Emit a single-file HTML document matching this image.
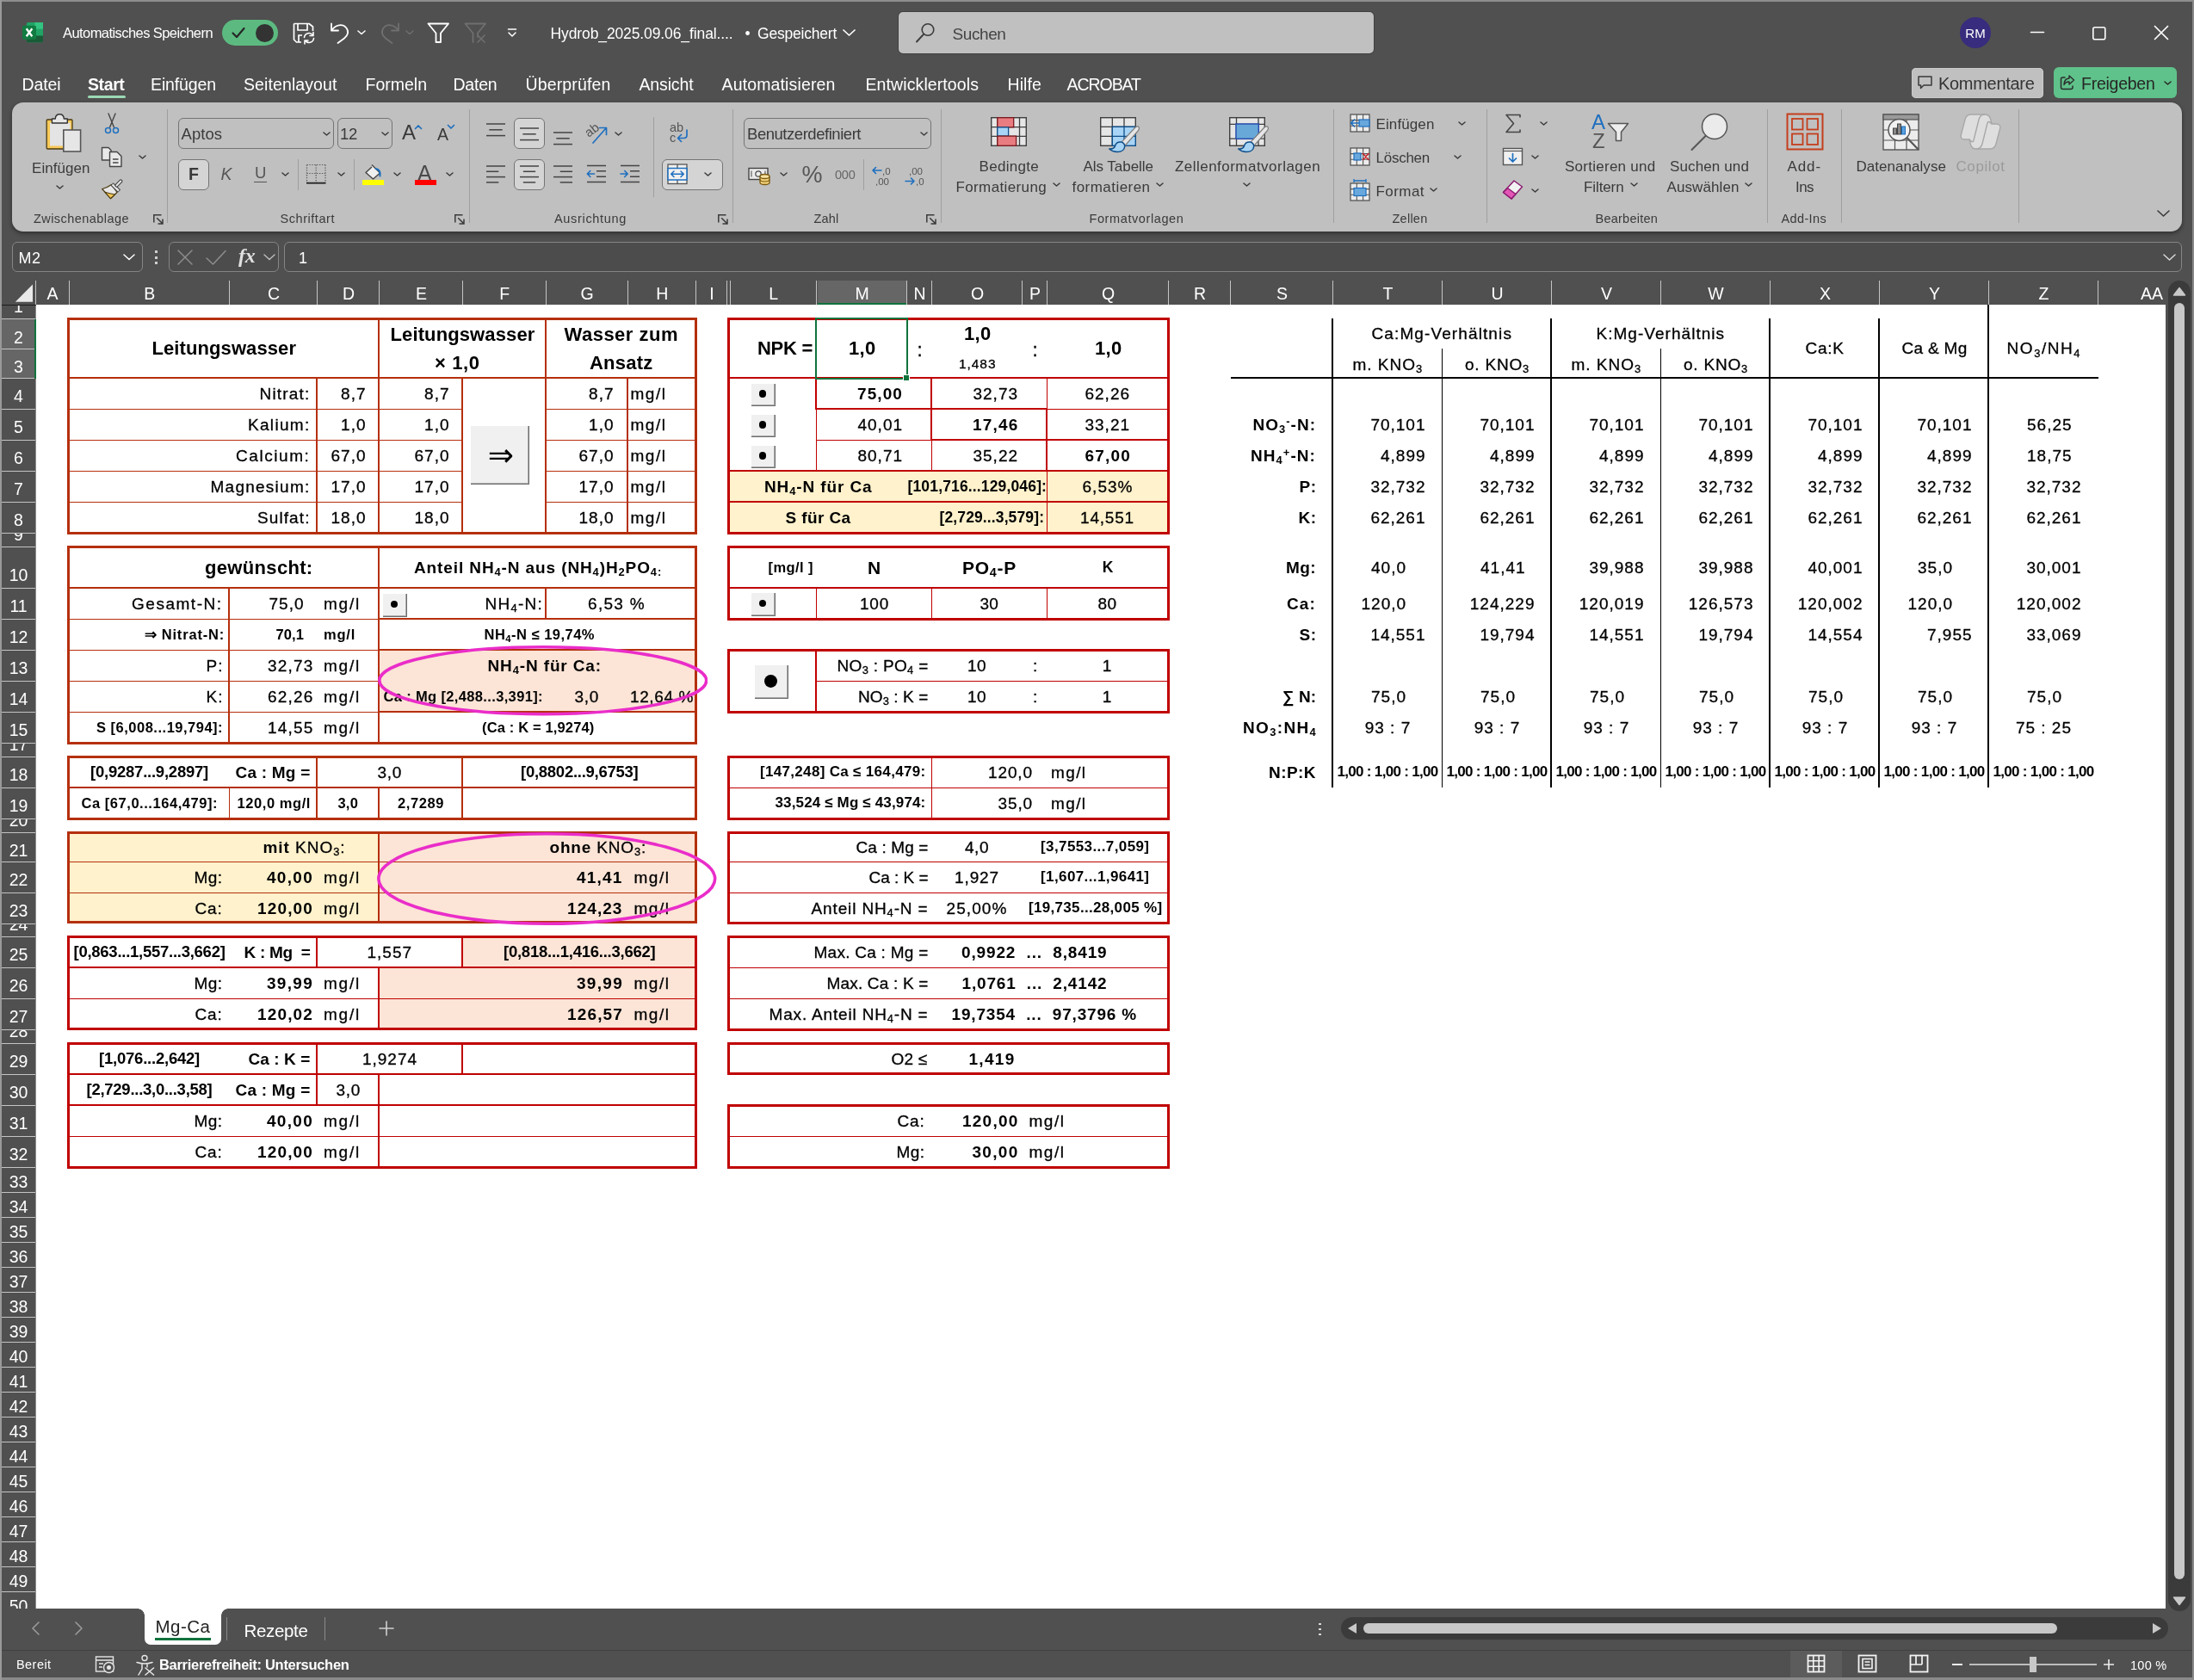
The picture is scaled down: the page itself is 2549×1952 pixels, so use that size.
<!DOCTYPE html>
<html lang="de"><head><meta charset="utf-8"><title>Hydrob_2025.09.06_final - Excel</title>
<style>
html,body{margin:0;padding:0}
body{width:2549px;height:1952px;background:#505050;position:relative;overflow:hidden;font-family:"Liberation Sans",sans-serif;color:#000}
body div,body span.t,body svg{position:absolute}
.t{white-space:pre;display:block}
.sb{font-size:68%;position:relative;top:0.28em;line-height:0}
.sp{font-size:68%;position:relative;top:-0.42em;line-height:0}
.rg{font-weight:normal}
.r{-webkit-text-stroke:.3px #000}
.r b{-webkit-text-stroke:0}
#app{left:0;top:0;width:2549px;height:1952px;will-change:transform;overflow:hidden}
</style></head>
<body><div id="app">
<svg style="left:25px;top:25px;" width="26" height="26" viewBox="0 0 26 26" fill="none"><rect x="5.800" y="1" width="19.200" height="23.300" rx="2" fill="#21a366"/><rect x="15.400" y="1" width="9.600" height="7.800" fill="#33c481"/><rect x="5.800" y="8.800" width="9.600" height="7.800" fill="#107c41"/><rect x="15.400" y="8.800" width="9.600" height="7.800" fill="#21a366"/><path d="M5.800 16.600 H25 V22.300 Q25 24.300 23 24.300 H7.800 Q5.800 24.300 5.800 22.300 Z" fill="#185c37"/><rect x="1" y="4.700" width="16" height="16" rx="1.500" fill="#107c41"/><path d="M5.700 8.300 L12.300 17.200 M12.300 8.300 L5.700 17.200" stroke="#fff" stroke-width="2.300"/></svg>
<span class="t" style="left:73.0px;top:28.0px;line-height:21px;font-size:16.5px;letter-spacing:-0.57px;color:#ffffff;">Automatisches Speichern</span>
<div style="left:258px;top:23px;width:65px;height:30px;border-radius:15px;background:#5cba80"></div>
<div style="left:297px;top:27.5px;width:21px;height:21px;border-radius:50%;background:#333"></div>
<svg style="left:268px;top:30px;" width="18" height="16" viewBox="0 0 18 16" fill="none"><path d="M2.5 8.5 L7 13 L15.5 3" stroke="#262626" stroke-width="2.2" stroke-linecap="round" stroke-linejoin="round"/></svg>
<svg style="left:339px;top:25px;" width="28" height="27" viewBox="0 0 28 27" fill="none"><path d="M2.5 2.5 H20 L24.5 6 V11 M2.5 2.5 V21 L5.5 24 H11" stroke="#fff" stroke-width="1.7" stroke-linejoin="round"/><path d="M7 3 V10 H18 V3" stroke="#fff" stroke-width="1.7"/><path d="M8 24 V16 H12" stroke="#fff" stroke-width="1.7"/><path d="M14.5 18.5 a5.5 5.5 0 0 1 10 -2.5 M25 12.5 v4 h-4 M25.5 19.5 a5.5 5.5 0 0 1 -10 2.5 M15 26 v-4 h4" stroke="#fff" stroke-width="1.6" stroke-linecap="round" stroke-linejoin="round"/></svg>
<svg style="left:382px;top:25px;" width="26" height="27" viewBox="0 0 26 27" fill="none"><path d="M3 2.5 V10.5 H11" stroke="#fff" stroke-width="1.8" stroke-linecap="round" stroke-linejoin="round"/><path d="M3.5 10 C8 3.5 16 2.5 20 7 C24 11.5 22 16.5 18 19.5 L10.5 25" stroke="#fff" stroke-width="1.8" stroke-linecap="round"/></svg>
<svg style="left:414.5px;top:34.5px;" width="10" height="6" viewBox="0 0 10 6" fill="none"><path d="M1 1 L5 4.5 L9 1" stroke="#ffffff" stroke-width="1.5" stroke-linecap="round" stroke-linejoin="round"/></svg>
<svg style="left:440px;top:25px;" width="26" height="27" viewBox="0 0 26 27" fill="none"><path d="M23 2.5 V10.5 H15" stroke="#6f6f6f" stroke-width="1.8" stroke-linecap="round" stroke-linejoin="round"/><path d="M22.5 10 C18 3.5 10 2.5 6 7 C2 11.5 4 16.5 8 19.5 L15.5 25" stroke="#6f6f6f" stroke-width="1.8" stroke-linecap="round"/></svg>
<svg style="left:471px;top:34.5px;" width="10" height="6" viewBox="0 0 10 6" fill="none"><path d="M1 1 L5 4.5 L9 1" stroke="#6f6f6f" stroke-width="1.5" stroke-linecap="round" stroke-linejoin="round"/></svg>
<svg style="left:496px;top:25px;" width="27" height="27" viewBox="0 0 27 27" fill="none"><path d="M1.5 2.5 H25 L16 13.5 V24 H10.5 V13.5 Z" stroke="#fff" stroke-width="1.8" stroke-linejoin="round"/></svg>
<svg style="left:539px;top:25px;" width="27" height="27" viewBox="0 0 27 27" fill="none"><path d="M1.5 2.5 H25 L16 13.5 V18 M10.5 24 V13.5 L1.5 2.5" stroke="#6f6f6f" stroke-width="1.8" stroke-linejoin="round" stroke-linecap="round"/><path d="M16 16 L24 24 M24 16 L16 24" stroke="#6f6f6f" stroke-width="1.7" stroke-linecap="round"/></svg>
<svg style="left:589px;top:32px;" width="12" height="12" viewBox="0 0 12 12" fill="none"><path d="M1.5 2 H10.5" stroke="#fff" stroke-width="1.5" stroke-linecap="round"/><path d="M2 6 L6 10 L10 6" stroke="#fff" stroke-width="1.5" stroke-linecap="round" stroke-linejoin="round"/></svg>
<span class="t" style="left:639.5px;top:27.8px;line-height:23px;font-size:17.5px;letter-spacing:-0.11px;color:#ffffff;">Hydrob_2025.09.06_final....</span>
<span class="t" style="left:865.4px;top:27.8px;line-height:23px;font-size:17.5px;color:#ffffff;">•</span>
<span class="t" style="left:880.0px;top:27.8px;line-height:23px;font-size:17.5px;letter-spacing:-0.21px;color:#ffffff;">Gespeichert</span>
<svg style="left:979px;top:34.25px;" width="15" height="8.5" viewBox="0 0 15 8.5" fill="none"><path d="M1 1 L7.5 7 L14 1" stroke="#ffffff" stroke-width="1.7" stroke-linecap="round" stroke-linejoin="round"/></svg>
<div style="left:1044px;top:14px;width:552px;height:48px;background:#c0c0c0;border-radius:5px;box-shadow:0 0 0 1px #404040"></div>
<svg style="left:1063px;top:26px;" width="25" height="25" viewBox="0 0 25 25" fill="none"><circle cx="15" cy="8.500" r="6.800" stroke="#3a3a3a" stroke-width="1.600"/><path d="M10 13.800 L2 22.500" stroke="#3a3a3a" stroke-width="1.9" stroke-linecap="round"/></svg>
<span class="t" style="left:1106.5px;top:27.3px;line-height:25px;font-size:19px;letter-spacing:-0.41px;color:#444;">Suchen</span>
<div style="left:2277px;top:20px;width:36px;height:36px;border-radius:50%;background:#372c7d"></div>
<span class="t" style="left:2283.3px;top:28.8px;line-height:20px;font-size:15px;color:#fff;">RM</span>
<svg style="left:2358px;top:30px;" width="18" height="16" viewBox="0 0 18 16" fill="none"><path d="M1.5 7.5 H16.5" stroke="#fff" stroke-width="1.6" stroke-linecap="round"/></svg>
<svg style="left:2430px;top:30px;" width="18" height="18" viewBox="0 0 18 18" fill="none"><rect x="1.8" y="1.8" width="14" height="14" rx="2" stroke="#fff" stroke-width="1.6"/></svg>
<svg style="left:2502px;top:29px;" width="18" height="18" viewBox="0 0 18 18" fill="none"><path d="M1.5 1.5 L16.5 16.5 M16.5 1.5 L1.5 16.5" stroke="#fff" stroke-width="1.7" stroke-linecap="round"/></svg>
<span class="t" style="left:25.5px;top:85.5px;line-height:25px;font-size:19.5px;letter-spacing:-0.10px;color:#ffffff;">Datei</span>
<span class="t" style="left:175.0px;top:85.5px;line-height:25px;font-size:19.5px;letter-spacing:-0.12px;color:#ffffff;">Einfügen</span>
<span class="t" style="left:283.0px;top:85.5px;line-height:25px;font-size:19.5px;letter-spacing:0.10px;color:#ffffff;">Seitenlayout</span>
<span class="t" style="left:424.5px;top:85.5px;line-height:25px;font-size:19.5px;color:#ffffff;">Formeln</span>
<span class="t" style="left:526.5px;top:85.5px;line-height:25px;font-size:19.5px;letter-spacing:-0.21px;color:#ffffff;">Daten</span>
<span class="t" style="left:610.5px;top:85.5px;line-height:25px;font-size:19.5px;letter-spacing:0.14px;color:#ffffff;">Überprüfen</span>
<span class="t" style="left:742.5px;top:85.5px;line-height:25px;font-size:19.5px;letter-spacing:-0.14px;color:#ffffff;">Ansicht</span>
<span class="t" style="left:838.5px;top:85.5px;line-height:25px;font-size:19.5px;letter-spacing:0.14px;color:#ffffff;">Automatisieren</span>
<span class="t" style="left:1005.5px;top:85.5px;line-height:25px;font-size:19.5px;letter-spacing:0.10px;color:#ffffff;">Entwicklertools</span>
<span class="t" style="left:1170.5px;top:85.5px;line-height:25px;font-size:19.5px;letter-spacing:0.10px;color:#ffffff;">Hilfe</span>
<span class="t" style="left:1239.5px;top:85.5px;line-height:25px;font-size:19.5px;letter-spacing:-1.05px;color:#ffffff;">ACROBAT</span>
<span class="t" style="left:102.0px;top:85.5px;line-height:25px;font-size:19.5px;letter-spacing:-0.39px;font-weight:bold;color:#ffffff;">Start</span>
<div style="left:102px;top:111px;width:44px;height:3px;border-radius:1.5px;background:#9bd8b5"></div>
<div style="left:2220.5px;top:78.5px;width:153px;height:35px;background:#c0c0c0;border-radius:5px;box-shadow:inset 0 0 0 1px #cbcbcb"></div>
<svg style="left:2227px;top:87px;" width="19" height="18" viewBox="0 0 19 18" fill="none"><path d="M2 2 H17 V12 H8 L4.5 15.5 V12 H2 Z" stroke="#3a3a3a" stroke-width="1.5" stroke-linejoin="round"/></svg>
<span class="t" style="left:2252.0px;top:84.2px;line-height:26px;font-size:20px;letter-spacing:-0.30px;color:#333;">Kommentare</span>
<div style="left:2386px;top:78px;width:143px;height:36px;background:#5fc28a;border-radius:6px"></div>
<svg style="left:2392px;top:86px;" width="20" height="20" viewBox="0 0 20 20" fill="none"><path d="M7 4 H4.5 Q2.5 4 2.5 6 V15.5 Q2.5 17.5 4.5 17.5 H14 Q16 17.5 16 15.5 V14" stroke="#2b2b2b" stroke-width="1.5" stroke-linecap="round"/><path d="M12 2 L17.5 7 L12 12 V9 Q7.5 9 6 12.5 Q6 5.5 12 5 Z" stroke="#2b2b2b" stroke-width="1.4" stroke-linejoin="round"/></svg>
<span class="t" style="left:2418.0px;top:85.3px;line-height:25px;font-size:19.5px;letter-spacing:-0.26px;color:#262626;">Freigeben</span>
<svg style="left:2514px;top:93.75px;" width="9" height="5.5" viewBox="0 0 9 5.5" fill="none"><path d="M1 1 L4.5 4 L8 1" stroke="#262626" stroke-width="1.5" stroke-linecap="round" stroke-linejoin="round"/></svg>
<div style="left:14px;top:119px;width:2521px;height:150px;background:#c0c0c0;border-radius:13px;box-shadow:0 2px 5px rgba(0,0,0,.45)"></div>
<div style="left:194px;top:127px;width:1px;height:132px;background:#9f9f9f;"></div>
<div style="left:545px;top:127px;width:1px;height:132px;background:#9f9f9f;"></div>
<div style="left:851px;top:127px;width:1px;height:132px;background:#9f9f9f;"></div>
<div style="left:1093px;top:127px;width:1px;height:132px;background:#9f9f9f;"></div>
<div style="left:1549px;top:127px;width:1px;height:132px;background:#9f9f9f;"></div>
<div style="left:1727px;top:127px;width:1px;height:132px;background:#9f9f9f;"></div>
<div style="left:2053px;top:127px;width:1px;height:132px;background:#9f9f9f;"></div>
<div style="left:2139px;top:127px;width:1px;height:132px;background:#9f9f9f;"></div>
<div style="left:2345px;top:127px;width:1px;height:132px;background:#9f9f9f;"></div>
<div style="left:346px;top:185px;width:1px;height:36px;background:#9f9f9f;"></div>
<div style="left:411px;top:185px;width:1px;height:36px;background:#9f9f9f;"></div>
<div style="left:759px;top:136px;width:1px;height:93px;background:#9f9f9f;"></div>
<div style="left:1003px;top:185px;width:1px;height:36px;background:#9f9f9f;"></div>
<span class="t" style="left:39.0px;top:244.8px;line-height:19px;font-size:14.5px;letter-spacing:0.44px;color:#3a3a3a;">Zwischenablage</span>
<span class="t" style="left:325.5px;top:244.8px;line-height:19px;font-size:14.5px;letter-spacing:0.55px;color:#3a3a3a;">Schriftart</span>
<span class="t" style="left:644.0px;top:244.8px;line-height:19px;font-size:14.5px;letter-spacing:0.68px;color:#3a3a3a;">Ausrichtung</span>
<span class="t" style="left:945.5px;top:244.8px;line-height:19px;font-size:14.5px;letter-spacing:0.20px;color:#3a3a3a;">Zahl</span>
<span class="t" style="left:1265.5px;top:244.8px;line-height:19px;font-size:14.5px;letter-spacing:0.60px;color:#3a3a3a;">Formatvorlagen</span>
<span class="t" style="left:1617.5px;top:244.8px;line-height:19px;font-size:14.5px;letter-spacing:0.25px;color:#3a3a3a;">Zellen</span>
<span class="t" style="left:1853.5px;top:244.8px;line-height:19px;font-size:14.5px;letter-spacing:0.24px;color:#3a3a3a;">Bearbeiten</span>
<span class="t" style="left:2069.5px;top:244.8px;line-height:19px;font-size:14.5px;letter-spacing:0.36px;color:#3a3a3a;">Add-Ins</span>
<svg style="left:177.5px;top:249px;" width="12" height="12" viewBox="0 0 12 12" fill="none"><path d="M0.800 9.500 V0.800 H9.500 M4.200 4.200 L10.800 10.800 M11 5.500 V11 H5.500" stroke="#3a3a3a" stroke-width="1.500"/></svg>
<svg style="left:528px;top:249px;" width="12" height="12" viewBox="0 0 12 12" fill="none"><path d="M0.800 9.500 V0.800 H9.500 M4.200 4.200 L10.800 10.800 M11 5.500 V11 H5.500" stroke="#3a3a3a" stroke-width="1.500"/></svg>
<svg style="left:833.5px;top:249px;" width="12" height="12" viewBox="0 0 12 12" fill="none"><path d="M0.800 9.500 V0.800 H9.500 M4.200 4.200 L10.800 10.800 M11 5.500 V11 H5.500" stroke="#3a3a3a" stroke-width="1.500"/></svg>
<svg style="left:1076px;top:249px;" width="12" height="12" viewBox="0 0 12 12" fill="none"><path d="M0.800 9.500 V0.800 H9.500 M4.200 4.200 L10.800 10.800 M11 5.500 V11 H5.500" stroke="#3a3a3a" stroke-width="1.500"/></svg>
<svg style="left:52px;top:131px;" width="44" height="48" viewBox="0 0 44 48" fill="none"><rect x="2.200" y="8" width="29.800" height="34" rx="1" fill="#f7c958" stroke="#4a3a10" stroke-width="1.300"/><rect x="6" y="11.500" width="23.600" height="27" fill="#e4e4e4"/><path d="M8.400 12 V7 H12.300 Q12.500 1.700 17.300 1.700 Q22 1.700 22.300 7 H26.300 V12 Z" fill="#e6e6e6" stroke="#333" stroke-width="1.400" stroke-linejoin="round"/><rect x="21.800" y="20" width="19.800" height="25" fill="#e6e6e6" stroke="#555" stroke-width="1.600"/></svg>
<span class="t" style="left:37.0px;top:184.6px;line-height:22px;font-size:17px;letter-spacing:0.05px;color:#3a3a3a;">Einfügen</span>
<svg style="left:64.5px;top:214.75px;" width="9" height="5.5" viewBox="0 0 9 5.5" fill="none"><path d="M1 1 L4.5 4 L8 1" stroke="#3a3a3a" stroke-width="1.5" stroke-linecap="round" stroke-linejoin="round"/></svg>
<svg style="left:121px;top:131px;" width="18" height="26" viewBox="0 0 18 26" fill="none"><path d="M5 1 L11.5 17 M13 1 L6.5 17" stroke="#444" stroke-width="1.4" stroke-linecap="round"/><circle cx="4.5" cy="20.5" r="3" stroke="#1e6fbf" stroke-width="1.5"/><circle cx="13.5" cy="20.5" r="3" stroke="#1e6fbf" stroke-width="1.5"/></svg>
<svg style="left:117px;top:170px;" width="27" height="25" viewBox="0 0 27 25" fill="none"><path d="M1.5 1.5 H9 L12 4.5 V16 H1.5 Z" fill="#e8e8e8" stroke="#444" stroke-width="1.4" stroke-linejoin="round"/><path d="M10.5 6.5 H19 L24 11.5 V23.5 H10.5 Z" fill="#e8e8e8" stroke="#444" stroke-width="1.4" stroke-linejoin="round"/><path d="M14 15 H20.5 M14 19 H20.5" stroke="#444" stroke-width="1.3"/></svg>
<svg style="left:161px;top:180.25px;" width="9" height="5.5" viewBox="0 0 9 5.5" fill="none"><path d="M1 1 L4.5 4 L8 1" stroke="#3a3a3a" stroke-width="1.5" stroke-linecap="round" stroke-linejoin="round"/></svg>
<svg style="left:117px;top:208px;" width="27" height="25" viewBox="0 0 27 25" fill="none"><path d="M12.500 6.500 L19 15.500 L11.500 22.700 L1.700 11.500 Q7 10.500 12.500 6.500 Z" fill="#e8e8e8" stroke="#4a3a10" stroke-width="1.200" stroke-linejoin="round"/><path d="M5 15.300 Q10 17 16.500 18 L11.500 22.700 Z" fill="#f5c95c" stroke="#4a3a10" stroke-width="1.100" stroke-linejoin="round"/><path d="M13 5.800 L21.500 14.200" stroke="#444" stroke-width="4.600" stroke-linecap="butt"/><path d="M13.600 6.400 L20.900 13.600" stroke="#e8e8e8" stroke-width="2.400"/><path d="M18.500 7.500 L23.300 2.500" stroke="#444" stroke-width="4.200" stroke-linecap="round"/><path d="M18.500 7.500 L23.300 2.500" stroke="#e8e8e8" stroke-width="2" stroke-linecap="round"/></svg>
<div style="left:207px;top:137px;width:180.5px;height:35.5px;box-sizing:border-box;border:1px solid #747474;border-radius:6px;background:none"></div>
<span class="t" style="left:210.5px;top:143.8px;line-height:24px;font-size:18.5px;letter-spacing:0.04px;color:#3a3a3a;">Aptos</span>
<svg style="left:374.5px;top:152.75px;" width="9" height="5.5" viewBox="0 0 9 5.5" fill="none"><path d="M1 1 L4.5 4 L8 1" stroke="#3a3a3a" stroke-width="1.5" stroke-linecap="round" stroke-linejoin="round"/></svg>
<div style="left:391.5px;top:137px;width:64px;height:35.5px;box-sizing:border-box;border:1px solid #747474;border-radius:6px;background:none"></div>
<span class="t" style="left:395.0px;top:143.8px;line-height:24px;font-size:18.5px;letter-spacing:-0.29px;color:#3a3a3a;">12</span>
<svg style="left:442.5px;top:152.75px;" width="9" height="5.5" viewBox="0 0 9 5.5" fill="none"><path d="M1 1 L4.5 4 L8 1" stroke="#3a3a3a" stroke-width="1.5" stroke-linecap="round" stroke-linejoin="round"/></svg>
<span class="t" style="left:467.0px;top:138.3px;line-height:31px;font-size:24px;color:#3a3a3a;">A</span>
<svg style="left:481px;top:144px;" width="10" height="7" viewBox="0 0 10 7" fill="none"><path d="M1.5 5.5 L5 2 L8.5 5.5" stroke="#1e6fbf" stroke-width="1.7" stroke-linecap="round" stroke-linejoin="round"/></svg>
<span class="t" style="left:508.0px;top:143.8px;line-height:25px;font-size:19.5px;color:#3a3a3a;">A</span>
<svg style="left:519px;top:144px;" width="10" height="7" viewBox="0 0 10 7" fill="none"><path d="M1.5 1.5 L5 5 L8.5 1.5" stroke="#1e6fbf" stroke-width="1.7" stroke-linecap="round" stroke-linejoin="round"/></svg>
<div style="left:207px;top:185px;width:35.5px;height:35.5px;box-sizing:border-box;border:1px solid #747474;border-radius:6px;background:#d4d4d4"></div>
<span class="t" style="left:219.0px;top:189.8px;line-height:25px;font-size:19.5px;font-weight:bold;color:#3a3a3a;">F</span>
<span class="t" style="left:256.5px;top:189.8px;line-height:25px;font-size:19.5px;letter-spacing:0.49px;font-style:italic;color:#555;">K</span>
<span class="t" style="left:296.0px;top:189.3px;line-height:24px;font-size:18.5px;letter-spacing:-0.36px;color:#555;">U</span>
<div style="left:295px;top:210.5px;width:15px;height:1.5px;background:#555;"></div>
<svg style="left:326.5px;top:200.25px;" width="9" height="5.5" viewBox="0 0 9 5.5" fill="none"><path d="M1 1 L4.5 4 L8 1" stroke="#3a3a3a" stroke-width="1.5" stroke-linecap="round" stroke-linejoin="round"/></svg>
<svg style="left:355px;top:190px;" width="25" height="25" viewBox="0 0 25 25" fill="none"><path d="M1.5 1.5 H23 M1.5 1.5 V22 M23 1.5 V22 M12.2 1.5 V22 M1.5 11.5 H23" stroke="#555" stroke-width="1.2" stroke-dasharray="1.3 1.6"/><path d="M1 22.7 H23.5" stroke="#222" stroke-width="1.8"/></svg>
<svg style="left:391.5px;top:200.25px;" width="9" height="5.5" viewBox="0 0 9 5.5" fill="none"><path d="M1 1 L4.5 4 L8 1" stroke="#3a3a3a" stroke-width="1.5" stroke-linecap="round" stroke-linejoin="round"/></svg>
<svg style="left:421px;top:190px;" width="26" height="20" viewBox="0 0 26 20" fill="none"><path d="M11 1.5 L20.5 11 L12.5 18 L4 10.5 L11 4" fill="#efefef" stroke="#444" stroke-width="1.4" stroke-linejoin="round"/><path d="M15.5 6 Q21.5 7 20.5 14.5" stroke="#1e6fbf" stroke-width="2" stroke-linecap="round"/></svg>
<div style="left:421px;top:209px;width:24.5px;height:6px;background:#ffff00;"></div>
<svg style="left:456.5px;top:200.25px;" width="9" height="5.5" viewBox="0 0 9 5.5" fill="none"><path d="M1 1 L4.5 4 L8 1" stroke="#3a3a3a" stroke-width="1.5" stroke-linecap="round" stroke-linejoin="round"/></svg>
<span class="t" style="left:485.0px;top:184.8px;line-height:32px;font-size:25px;letter-spacing:1.32px;color:#4a4a4a;">A</span>
<div style="left:482px;top:209px;width:24.5px;height:6px;background:#ff0000;"></div>
<svg style="left:517.5px;top:200.25px;" width="9" height="5.5" viewBox="0 0 9 5.5" fill="none"><path d="M1 1 L4.5 4 L8 1" stroke="#3a3a3a" stroke-width="1.5" stroke-linecap="round" stroke-linejoin="round"/></svg>
<svg style="left:565px;top:142.5px;" width="22" height="22.4" viewBox="0 0 22 22.4" fill="none"><path d="M0 1 H22" stroke="#444" stroke-width="1.5"/><path d="M3.3 7.8 H18.7" stroke="#444" stroke-width="1.5"/><path d="M0 14.6 H22" stroke="#444" stroke-width="1.5"/></svg>
<div style="left:597px;top:137px;width:35.5px;height:35.5px;box-sizing:border-box;border:1px solid #747474;border-radius:6px;background:#d4d4d4"></div>
<svg style="left:604px;top:147.5px;" width="22" height="22.4" viewBox="0 0 22 22.4" fill="none"><path d="M0 1 H22" stroke="#444" stroke-width="1.5"/><path d="M3.3 7.8 H18.7" stroke="#444" stroke-width="1.5"/><path d="M0 14.6 H22" stroke="#444" stroke-width="1.5"/></svg>
<svg style="left:643px;top:153px;" width="22" height="22.4" viewBox="0 0 22 22.4" fill="none"><path d="M0 1 H22" stroke="#444" stroke-width="1.5"/><path d="M3.3 7.8 H18.7" stroke="#444" stroke-width="1.5"/><path d="M0 14.6 H22" stroke="#444" stroke-width="1.5"/></svg>
<svg style="left:679px;top:140px;" width="30" height="28" viewBox="0 0 30 28" fill="none"><text x="2" y="17" font-size="15" fill="#555" font-family="Liberation Sans" transform="rotate(-38 8 14)">ab</text><path d="M10 26 L25 9 M17.5 8.5 H25.5 V16.5" stroke="#1e6fbf" stroke-width="1.7" stroke-linecap="round" stroke-linejoin="round"/></svg>
<svg style="left:713.5px;top:152.75px;" width="9" height="5.5" viewBox="0 0 9 5.5" fill="none"><path d="M1 1 L4.5 4 L8 1" stroke="#3a3a3a" stroke-width="1.5" stroke-linecap="round" stroke-linejoin="round"/></svg>
<svg style="left:777px;top:142px;" width="26" height="26" viewBox="0 0 26 26" fill="none"><text x="1" y="11" font-size="14.5" fill="#555" font-family="Liberation Sans">ab</text><text x="1" y="23" font-size="14.5" fill="#555" font-family="Liberation Sans">c</text><path d="M21 9 V15 Q21 18.5 17.5 18.5 H11 M14.5 14.5 L10.5 18.5 L14.5 22.5" stroke="#1e6fbf" stroke-width="1.7" stroke-linecap="round" stroke-linejoin="round"/></svg>
<svg style="left:565px;top:192px;" width="22" height="27.2" viewBox="0 0 22 27.2" fill="none"><path d="M0 1 H22" stroke="#444" stroke-width="1.5"/><path d="M0 7.3 H14.3" stroke="#444" stroke-width="1.5"/><path d="M0 13.6 H22" stroke="#444" stroke-width="1.5"/><path d="M0 19.9 H14.3" stroke="#444" stroke-width="1.5"/></svg>
<div style="left:597px;top:185px;width:35.5px;height:35.5px;box-sizing:border-box;border:1px solid #747474;border-radius:6px;background:#d4d4d4"></div>
<svg style="left:604px;top:192px;" width="22" height="27.2" viewBox="0 0 22 27.2" fill="none"><path d="M0 1 H22" stroke="#444" stroke-width="1.5"/><path d="M3.85 7.3 H18.15" stroke="#444" stroke-width="1.5"/><path d="M0 13.6 H22" stroke="#444" stroke-width="1.5"/><path d="M3.85 19.9 H18.15" stroke="#444" stroke-width="1.5"/></svg>
<svg style="left:643px;top:192px;" width="22" height="27.2" viewBox="0 0 22 27.2" fill="none"><path d="M0 1 H22" stroke="#444" stroke-width="1.5"/><path d="M7.7 7.3 H22" stroke="#444" stroke-width="1.5"/><path d="M0 13.6 H22" stroke="#444" stroke-width="1.5"/><path d="M7.7 19.9 H22" stroke="#444" stroke-width="1.5"/></svg>
<svg style="left:681px;top:191px;" width="24" height="22" viewBox="0 0 24 22" fill="none"><path d="M1 1.5 H23 M12 7.8 H23 M12 14.2 H23 M1 20.5 H23" stroke="#444" stroke-width="1.5"/><path d="M9.5 11 H1.5 M4.8 7.5 L1.3 11 L4.8 14.5" stroke="#1e6fbf" stroke-width="1.6" stroke-linecap="round" stroke-linejoin="round"/></svg>
<svg style="left:720px;top:191px;" width="24" height="22" viewBox="0 0 24 22" fill="none"><path d="M1 1.5 H23 M12 7.8 H23 M12 14.2 H23 M1 20.5 H23" stroke="#444" stroke-width="1.5"/><path d="M1 11 H9 M5.7 7.5 L9.2 11 L5.7 14.5" stroke="#1e6fbf" stroke-width="1.6" stroke-linecap="round" stroke-linejoin="round"/></svg>
<div style="left:769px;top:185px;width:71px;height:35.5px;box-sizing:border-box;border:1px solid #747474;border-radius:6px;background:#d4d4d4"></div>
<svg style="left:775px;top:190px;" width="24" height="25" viewBox="0 0 24 25" fill="none"><rect x="1" y="1" width="22" height="22.5" fill="#f0f0f0" stroke="#555" stroke-width="1.3"/><path d="M12 1 V5.5 M12 19 V23.5" stroke="#555" stroke-width="1.3"/><rect x="1" y="5.5" width="22" height="13.5" fill="#f0f0f0" stroke="#1e6fbf" stroke-width="1.5"/><path d="M5 12.2 H19 M8 9 L4.7 12.2 L8 15.5 M16 9 L19.3 12.2 L16 15.5" stroke="#1e6fbf" stroke-width="1.5" stroke-linecap="round" stroke-linejoin="round"/></svg>
<svg style="left:817.5px;top:200.25px;" width="9" height="5.5" viewBox="0 0 9 5.5" fill="none"><path d="M1 1 L4.5 4 L8 1" stroke="#3a3a3a" stroke-width="1.5" stroke-linecap="round" stroke-linejoin="round"/></svg>
<div style="left:864px;top:137px;width:217.5px;height:35.5px;box-sizing:border-box;border:1px solid #747474;border-radius:6px;background:none"></div>
<span class="t" style="left:868.0px;top:143.8px;line-height:24px;font-size:18.5px;letter-spacing:-0.46px;color:#3a3a3a;">Benutzerdefiniert</span>
<svg style="left:1068.5px;top:152.75px;" width="9" height="5.5" viewBox="0 0 9 5.5" fill="none"><path d="M1 1 L4.5 4 L8 1" stroke="#3a3a3a" stroke-width="1.5" stroke-linecap="round" stroke-linejoin="round"/></svg>
<svg style="left:869px;top:194px;" width="27" height="22" viewBox="0 0 27 22" fill="none"><rect x="1" y="1.5" width="22" height="13" fill="#ececec" stroke="#444" stroke-width="1.4"/><circle cx="12" cy="8" r="3.2" stroke="#444" stroke-width="1.2"/><path d="M4 4.5 V11.5 M20 4.5 V11.5" stroke="#444" stroke-width="1"/><path d="M14 11 V18 Q14 20.5 19.5 20.5 Q25 20.5 25 18 V11" fill="#f3d27a" stroke="#7a5a12" stroke-width="1.3"/><ellipse cx="19.5" cy="11" rx="5.5" ry="2.5" fill="#f7e2a0" stroke="#7a5a12" stroke-width="1.3"/><path d="M14 14.5 Q14 17 19.5 17 Q25 17 25 14.5" stroke="#7a5a12" stroke-width="1.1"/></svg>
<svg style="left:905.5px;top:200.25px;" width="9" height="5.5" viewBox="0 0 9 5.5" fill="none"><path d="M1 1 L4.5 4 L8 1" stroke="#3a3a3a" stroke-width="1.5" stroke-linecap="round" stroke-linejoin="round"/></svg>
<span class="t" style="left:931.5px;top:186.3px;line-height:35px;font-size:27px;letter-spacing:-1.01px;color:#555;">%</span>
<span class="t" style="left:970.0px;top:194.3px;line-height:19px;font-size:14.5px;letter-spacing:-0.23px;color:#666;">000</span>
<svg style="left:1012px;top:192px;" width="26" height="24" viewBox="0 0 26 24" fill="none"><path d="M2 6 H12 M5.5 2.5 L2 6 L5.5 9.5" stroke="#1e6fbf" stroke-width="1.6" stroke-linecap="round" stroke-linejoin="round"/><text x="13" y="10.5" font-size="11.5" fill="#555" font-family="Liberation Sans">,0</text><text x="5" y="22.5" font-size="11.5" fill="#555" font-family="Liberation Sans">,00</text></svg>
<svg style="left:1051px;top:192px;" width="26" height="24" viewBox="0 0 26 24" fill="none"><text x="5" y="10.5" font-size="11.5" fill="#555" font-family="Liberation Sans">,00</text><path d="M1 18.5 H11 M7.5 15 L11 18.5 L7.5 22" stroke="#1e6fbf" stroke-width="1.6" stroke-linecap="round" stroke-linejoin="round"/><text x="13" y="22.5" font-size="11.5" fill="#555" font-family="Liberation Sans">,0</text></svg>
<svg style="left:1151px;top:136px;" width="42" height="34" viewBox="0 0 42 34" fill="none"><rect x="0.700" y="0.700" width="40.6" height="32.6" fill="#e6e6e6" stroke="#3f3f3f" stroke-width="1.400"/><path d="M7.8 0.700 V33.3" stroke="#3f3f3f" stroke-width="1.300"/><path d="M33.5 0.700 V33.3" stroke="#3f3f3f" stroke-width="1.300"/><path d="M0.700 11.6 H41.3" stroke="#3f3f3f" stroke-width="1.300"/><path d="M0.700 22.4 H41.3" stroke="#3f3f3f" stroke-width="1.300"/><rect x="7.800" y="0.700" width="18.900" height="11.200" fill="#e87c80" stroke="#7a1a1e" stroke-width="1.300"/><rect x="7.800" y="11.900" width="12.800" height="10.200" fill="#a8d4f5" stroke="#0f4f8a" stroke-width="1.300"/><rect x="7.800" y="22.100" width="21.800" height="11.200" fill="#e87c80" stroke="#7a1a1e" stroke-width="1.300"/></svg>
<span class="t" style="left:1137.5px;top:183.1px;line-height:22px;font-size:17px;letter-spacing:0.30px;color:#3a3a3a;">Bedingte</span>
<span class="t" style="left:1110.5px;top:206.6px;line-height:22px;font-size:17px;letter-spacing:0.37px;color:#3a3a3a;">Formatierung</span>
<svg style="left:1223px;top:211.75px;" width="9" height="5.5" viewBox="0 0 9 5.5" fill="none"><path d="M1 1 L4.5 4 L8 1" stroke="#3a3a3a" stroke-width="1.5" stroke-linecap="round" stroke-linejoin="round"/></svg>
<svg style="left:1278px;top:136px;" width="42" height="34" viewBox="0 0 42 34" fill="none"><rect x="0.700" y="0.700" width="40.6" height="32.6" fill="#e6e6e6" stroke="#3f3f3f" stroke-width="1.400"/><path d="M14.3 0.700 V33.3" stroke="#3f3f3f" stroke-width="1.300"/><path d="M28 0.700 V33.3" stroke="#3f3f3f" stroke-width="1.300"/><path d="M0.700 11.3 H41.3" stroke="#3f3f3f" stroke-width="1.300"/><path d="M0.700 22.4 H41.3" stroke="#3f3f3f" stroke-width="1.300"/><rect x="14.300" y="11.300" width="27" height="22" fill="#a8d4f5" stroke="#0f4f8a" stroke-width="1.400"/><path d="M28 11.300 V33.300 M14.300 22.400 H41.300" stroke="#0f4f8a" stroke-width="1.300"/></svg>
<svg style="left:1278px;top:136px;" width="48" height="42" viewBox="0 0 48 42" fill="none"><path d="M24.800 29.300 L40.500 12.500 Q43.500 9.800 45 11.500 Q46.300 13.300 43.800 16.500 L28.800 33.500 Z" fill="#e6e6e6" stroke="#7d7d7d" stroke-width="1.200" stroke-linejoin="round"/><path d="M24.500 29 Q28.500 30 28.800 34 Q28 40.500 20 40.500 Q14.500 40.300 10.700 37 Q16.500 37.500 17.500 33.500 Q18.800 28.500 24.500 29 Z" fill="#a8d4f5" stroke="#0f4f8a" stroke-width="1.500" stroke-linejoin="round"/></svg>
<span class="t" style="left:1258.5px;top:183.1px;line-height:22px;font-size:17px;letter-spacing:-0.04px;color:#3a3a3a;">Als Tabelle</span>
<span class="t" style="left:1245.5px;top:206.6px;line-height:22px;font-size:17px;letter-spacing:0.46px;color:#3a3a3a;">formatieren</span>
<svg style="left:1342.5px;top:211.75px;" width="9" height="5.5" viewBox="0 0 9 5.5" fill="none"><path d="M1 1 L4.5 4 L8 1" stroke="#3a3a3a" stroke-width="1.5" stroke-linecap="round" stroke-linejoin="round"/></svg>
<svg style="left:1428px;top:136px;" width="42" height="34" viewBox="0 0 42 34" fill="none"><rect x="0.700" y="0.700" width="40.6" height="32.6" fill="#e6e6e6" stroke="#3f3f3f" stroke-width="1.400"/><path d="M8.5 0.700 V33.3" stroke="#3f3f3f" stroke-width="1.300"/><path d="M34 0.700 V33.3" stroke="#3f3f3f" stroke-width="1.300"/><path d="M0.700 8.3 H41.3" stroke="#3f3f3f" stroke-width="1.300"/><path d="M0.700 25.2 H41.3" stroke="#3f3f3f" stroke-width="1.300"/><rect x="8" y="8" width="26.300" height="17.300" fill="#68a8d8" stroke="#2a4fb0" stroke-width="1.500"/></svg>
<svg style="left:1428px;top:136px;" width="48" height="42" viewBox="0 0 48 42" fill="none"><path d="M24.800 29.300 L40.500 12.500 Q43.500 9.800 45 11.500 Q46.300 13.300 43.800 16.500 L28.800 33.500 Z" fill="#e6e6e6" stroke="#7d7d7d" stroke-width="1.200" stroke-linejoin="round"/><path d="M24.500 29 Q28.500 30 28.800 34 Q28 40.500 20 40.500 Q14.500 40.300 10.700 37 Q16.500 37.500 17.500 33.500 Q18.800 28.500 24.500 29 Z" fill="#a8d4f5" stroke="#0f4f8a" stroke-width="1.500" stroke-linejoin="round"/></svg>
<span class="t" style="left:1365.0px;top:183.1px;line-height:22px;font-size:17px;letter-spacing:0.47px;color:#3a3a3a;">Zellenformatvorlagen</span>
<svg style="left:1443.5px;top:212.25px;" width="9" height="5.5" viewBox="0 0 9 5.5" fill="none"><path d="M1 1 L4.5 4 L8 1" stroke="#3a3a3a" stroke-width="1.5" stroke-linecap="round" stroke-linejoin="round"/></svg>
<svg style="left:1568px;top:132px;" width="24" height="22" viewBox="0 0 24 22" fill="none"><rect x="1" y="1" width="22" height="20" fill="#ececec" stroke="#555" stroke-width="1.3" stroke-dasharray="none"/><path d="M8.300 1 V21 M15.600 1 V21 M1 7.600 H23 M1 14.300 H23" stroke="#555" stroke-width="1.1"/><rect x="11" y="7" width="12" height="8" fill="#69a8dc" stroke="#1e6fbf" stroke-width="1.2"/><path d="M11 11 H1.500 M5.500 7 L1.500 11 L5.500 15" stroke="#1e6fbf" stroke-width="1.7" stroke-linecap="round" stroke-linejoin="round"/></svg>
<span class="t" style="left:1598.5px;top:133.9px;line-height:22px;font-size:17px;letter-spacing:0.11px;color:#3a3a3a;">Einfügen</span>
<svg style="left:1693.5px;top:140.75px;" width="9" height="5.5" viewBox="0 0 9 5.5" fill="none"><path d="M1 1 L4.5 4 L8 1" stroke="#3a3a3a" stroke-width="1.5" stroke-linecap="round" stroke-linejoin="round"/></svg>
<svg style="left:1568px;top:171px;" width="24" height="22" viewBox="0 0 24 22" fill="none"><rect x="1" y="1" width="22" height="20" fill="#ececec" stroke="#555" stroke-width="1.3" stroke-dasharray="none"/><path d="M8.300 1 V21 M15.600 1 V21 M1 7.600 H23 M1 14.300 H23" stroke="#555" stroke-width="1.1"/><rect x="5" y="7" width="8" height="8" fill="#69a8dc" stroke="#1e6fbf" stroke-width="1.2"/><path d="M15.500 7.500 L22 14.500 M22 7.500 L15.500 14.500" stroke="#c4262e" stroke-width="1.7" stroke-linecap="round"/></svg>
<span class="t" style="left:1598.5px;top:172.9px;line-height:22px;font-size:17px;letter-spacing:-0.25px;color:#3a3a3a;">Löschen</span>
<svg style="left:1688.5px;top:180.25px;" width="9" height="5.5" viewBox="0 0 9 5.5" fill="none"><path d="M1 1 L4.5 4 L8 1" stroke="#3a3a3a" stroke-width="1.5" stroke-linecap="round" stroke-linejoin="round"/></svg>
<svg style="left:1568px;top:207.5px;" width="24" height="26" viewBox="0 0 24 26" fill="none"><path d="M5 2 H19 M5 0 V4 M19 0 V4" stroke="#1e6fbf" stroke-width="1.3"/><g transform="translate(0,4)"><rect x="1" y="1" width="22" height="20" fill="#ececec" stroke="#555" stroke-width="1.3" stroke-dasharray="none"/><path d="M8.300 1 V21 M15.600 1 V21 M1 7.600 H23 M1 14.300 H23" stroke="#555" stroke-width="1.1"/><rect x="5" y="6.500" width="14" height="9" fill="#69a8dc" stroke="#1e6fbf" stroke-width="1.2"/></g></svg>
<span class="t" style="left:1598.5px;top:211.7px;line-height:22px;font-size:17px;letter-spacing:0.44px;color:#3a3a3a;">Format</span>
<svg style="left:1661px;top:218.25px;" width="9" height="5.5" viewBox="0 0 9 5.5" fill="none"><path d="M1 1 L4.5 4 L8 1" stroke="#3a3a3a" stroke-width="1.5" stroke-linecap="round" stroke-linejoin="round"/></svg>
<svg style="left:1748px;top:132px;" width="20" height="23" viewBox="0 0 20 23" fill="none"><path d="M18 4.500 V1.500 H2 L10.500 11.500 L2 21.500 H18 V18.500" stroke="#444" stroke-width="1.6" stroke-linejoin="round"/></svg>
<svg style="left:1788.5px;top:140.75px;" width="9" height="5.5" viewBox="0 0 9 5.5" fill="none"><path d="M1 1 L4.5 4 L8 1" stroke="#3a3a3a" stroke-width="1.5" stroke-linecap="round" stroke-linejoin="round"/></svg>
<svg style="left:1745px;top:171px;" width="26" height="22" viewBox="0 0 26 22" fill="none"><rect x="1.500" y="1.500" width="22" height="19" fill="#f0f0f0" stroke="#555" stroke-width="1.4"/><path d="M1.500 4.500 H23.500" stroke="#555" stroke-width="1.2"/><path d="M12.500 7.500 V17 M8.500 13 L12.500 17 L16.500 13" stroke="#1e6fbf" stroke-width="1.7" stroke-linecap="round" stroke-linejoin="round"/></svg>
<svg style="left:1778.5px;top:180.25px;" width="9" height="5.5" viewBox="0 0 9 5.5" fill="none"><path d="M1 1 L4.5 4 L8 1" stroke="#3a3a3a" stroke-width="1.5" stroke-linecap="round" stroke-linejoin="round"/></svg>
<svg style="left:1745px;top:208px;" width="26" height="25" viewBox="0 0 26 25" fill="none"><path d="M14 2 L23.500 9 L11 23 L1.500 15.500 Z" fill="#f2f2f2" stroke="#8a1a6e" stroke-width="1.5" stroke-linejoin="round"/><path d="M6.500 10.500 L16 17.500 L11 23 L1.500 15.500 Z" fill="#e356b6" stroke="#8a1a6e" stroke-width="1.5" stroke-linejoin="round"/></svg>
<svg style="left:1778.5px;top:218.75px;" width="9" height="5.5" viewBox="0 0 9 5.5" fill="none"><path d="M1 1 L4.5 4 L8 1" stroke="#3a3a3a" stroke-width="1.5" stroke-linecap="round" stroke-linejoin="round"/></svg>
<svg style="left:1848px;top:131px;" width="46" height="44" viewBox="0 0 46 44" fill="none"><text x="1" y="19" font-size="24" fill="#1e6fbf" font-family="Liberation Sans">A</text><text x="2" y="41" font-size="24" fill="#555" font-family="Liberation Sans">Z</text><path d="M20.500 12.500 H43.500 L35.500 22.500 V32.500 H29.500 V22.500 Z" fill="#eeeeee" stroke="#555" stroke-width="1.5" stroke-linejoin="round"/></svg>
<span class="t" style="left:1818.0px;top:183.1px;line-height:22px;font-size:17px;letter-spacing:0.26px;color:#3a3a3a;">Sortieren und</span>
<span class="t" style="left:1840.0px;top:206.6px;line-height:22px;font-size:17px;letter-spacing:-0.10px;color:#3a3a3a;">Filtern</span>
<svg style="left:1893.5px;top:211.75px;" width="9" height="5.5" viewBox="0 0 9 5.5" fill="none"><path d="M1 1 L4.5 4 L8 1" stroke="#3a3a3a" stroke-width="1.5" stroke-linecap="round" stroke-linejoin="round"/></svg>
<svg style="left:1963px;top:131px;" width="46" height="46" viewBox="0 0 46 46" fill="none"><circle cx="29" cy="16" r="14.500" fill="#ebebeb" stroke="#555" stroke-width="1.5"/><path d="M18.500 27 L2.500 43" stroke="#555" stroke-width="2" stroke-linecap="round"/></svg>
<span class="t" style="left:1940.0px;top:183.1px;line-height:22px;font-size:17px;letter-spacing:0.13px;color:#3a3a3a;">Suchen und</span>
<span class="t" style="left:1936.5px;top:206.6px;line-height:22px;font-size:17px;letter-spacing:0.09px;color:#3a3a3a;">Auswählen</span>
<svg style="left:2027px;top:211.75px;" width="9" height="5.5" viewBox="0 0 9 5.5" fill="none"><path d="M1 1 L4.5 4 L8 1" stroke="#3a3a3a" stroke-width="1.5" stroke-linecap="round" stroke-linejoin="round"/></svg>
<svg style="left:2075px;top:131px;" width="44" height="44" viewBox="0 0 44 44" fill="none"><rect x="1.500" y="1.500" width="41" height="41" stroke="#c43e1c" stroke-width="2"/><rect x="7" y="7" width="12.500" height="12.500" stroke="#c43e1c" stroke-width="1.8"/><rect x="24.500" y="7" width="12.500" height="12.500" stroke="#c43e1c" stroke-width="1.8"/><rect x="7" y="24.500" width="12.500" height="12.500" stroke="#c43e1c" stroke-width="1.8"/><rect x="24.500" y="24.500" width="12.500" height="12.500" stroke="#c43e1c" stroke-width="1.8"/></svg>
<span class="t" style="left:2076.5px;top:183.1px;line-height:22px;font-size:17px;letter-spacing:0.90px;color:#3a3a3a;">Add-</span>
<span class="t" style="left:2086.0px;top:206.6px;line-height:22px;font-size:17px;letter-spacing:-0.56px;color:#3a3a3a;">Ins</span>
<svg style="left:2187px;top:132px;" width="44" height="44" viewBox="0 0 44 44" fill="none"><rect x="1" y="1" width="41" height="41" fill="#ececec" stroke="#555" stroke-width="1.4"/><rect x="1" y="1" width="41" height="6" fill="#9a9a9a" stroke="#555" stroke-width="1.2"/><path d="M1 19 H42 M1 31 H42 M14.500 7 V42 M28 7 V42" stroke="#555" stroke-width="1.2"/><circle cx="19.500" cy="19" r="12.500" fill="#f2f2f2" stroke="#555" stroke-width="1.5"/><path d="M28.500 28 L42 42" stroke="#555" stroke-width="2.2"/><rect x="12.500" y="17" width="4" height="7" fill="#888" stroke="#444" stroke-width="1"/><rect x="17.500" y="12" width="4" height="12" fill="#888" stroke="#444" stroke-width="1"/><rect x="22.500" y="15" width="4" height="9" fill="#5aa0dc" stroke="#1e6fbf" stroke-width="1"/></svg>
<span class="t" style="left:2156.5px;top:183.1px;line-height:22px;font-size:17px;letter-spacing:0.04px;color:#3a3a3a;">Datenanalyse</span>
<svg style="left:2276px;top:131px;" width="50" height="46" viewBox="0 0 50 46" fill="none"><path d="M14 2 H30 Q35 2 36.500 7 L38 13 H44 Q49 13.500 47.500 19 L43 36 Q41.500 42 36 42 H20 Q15 42 13.500 37 L12 31 H6 Q1 30.500 2.500 25 L7 8 Q8.500 2 14 2 Z" fill="#dedede" stroke="#a8a8a8" stroke-width="1.4"/><path d="M30 2 Q24.500 2 23 8 L17 32 Q16 36 12 31 M20 42 Q25.500 42 27 36 L33 12 Q34 8.500 38 13" stroke="#a8a8a8" stroke-width="1.4"/></svg>
<span class="t" style="left:2272.5px;top:183.1px;line-height:22px;font-size:17px;letter-spacing:0.58px;color:#9a9a9a;">Copilot</span>
<svg style="left:2505.5px;top:244.25px;" width="15" height="8.5" viewBox="0 0 15 8.5" fill="none"><path d="M1 1 L7.5 7 L14 1" stroke="#3a3a3a" stroke-width="1.6" stroke-linecap="round" stroke-linejoin="round"/></svg>
<div style="left:14px;top:281px;width:151.5px;height:35px;box-sizing:border-box;border:1px solid #858585;border-radius:6px;background:#4c4c4c"></div>
<div style="left:196px;top:281px;width:127.5px;height:35px;box-sizing:border-box;border:1px solid #858585;border-radius:6px;background:#4c4c4c"></div>
<div style="left:330px;top:281px;width:2205px;height:35px;box-sizing:border-box;border:1px solid #858585;border-radius:6px;background:#4c4c4c"></div>
<span class="t" style="left:21.5px;top:288.5px;line-height:23px;font-size:18px;letter-spacing:0.50px;color:#ffffff;">M2</span>
<svg style="left:142.5px;top:295px;" width="14" height="8" viewBox="0 0 14 8" fill="none"><path d="M1 1 L7 6.5 L13 1" stroke="#ffffff" stroke-width="1.5" stroke-linecap="round" stroke-linejoin="round"/></svg>
<div style="left:179.5px;top:291px;width:3px;height:3px;background:#d0d0d0;"></div>
<div style="left:179.5px;top:297.5px;width:3px;height:3px;background:#d0d0d0;"></div>
<div style="left:179.5px;top:304px;width:3px;height:3px;background:#d0d0d0;"></div>
<svg style="left:205px;top:289px;" width="20" height="20" viewBox="0 0 20 20" fill="none"><path d="M2 2 L18 18 M18 2 L2 18" stroke="#8d8d8d" stroke-width="1.5" stroke-linecap="round"/></svg>
<svg style="left:238px;top:289px;" width="26" height="20" viewBox="0 0 26 20" fill="none"><path d="M2 11 L9.5 18 L24 2.5" stroke="#8d8d8d" stroke-width="1.5" stroke-linecap="round" stroke-linejoin="round"/></svg>
<span class="t" style="left:277.0px;top:281.5px;line-height:31px;font-size:24px;letter-spacing:-0.17px;font-weight:bold;font-style:italic;color:#e0e0e0;font-family:'Liberation Serif',serif;">fx</span>
<svg style="left:306px;top:295px;" width="14" height="8" viewBox="0 0 14 8" fill="none"><path d="M1 1 L7 6.5 L13 1" stroke="#bdbdbd" stroke-width="1.4" stroke-linecap="round" stroke-linejoin="round"/></svg>
<span class="t" style="left:347.0px;top:288.5px;line-height:23px;font-size:18px;letter-spacing:-0.51px;color:#ffffff;">1</span>
<svg style="left:2512.5px;top:294.75px;" width="15" height="8.5" viewBox="0 0 15 8.5" fill="none"><path d="M1 1 L7.5 7 L14 1" stroke="#d8d8d8" stroke-width="1.5" stroke-linecap="round" stroke-linejoin="round"/></svg>
<div style="left:41px;top:354px;width:2475px;height:1514.5px;background:#fff;"></div>
<div style="left:440.5px;top:755px;width:368px;height:72px;background:#fce4d6;"></div>
<div style="left:80px;top:967px;width:360.5px;height:106px;background:#fff2cc;"></div>
<div style="left:440.5px;top:967px;width:368px;height:106px;background:#fce4d6;"></div>
<div style="left:537.5px;top:1088px;width:271px;height:36px;background:#fce4d6;"></div>
<div style="left:440.5px;top:1124px;width:368px;height:72px;background:#fce4d6;"></div>
<div style="left:846.5px;top:547px;width:511px;height:72px;background:#fff2cc;"></div>
<div style="left:78px;top:369px;width:732px;height:3px;background:#b52f0c;"></div>
<div style="left:78px;top:618px;width:732px;height:3px;background:#b52f0c;"></div>
<div style="left:78px;top:370.5px;width:3px;height:248.5px;background:#b52f0c;"></div>
<div style="left:807px;top:370.5px;width:3px;height:248.5px;background:#b52f0c;"></div>
<div style="left:80px;top:438px;width:728.5px;height:2px;background:#b52f0c;"></div>
<div style="left:367px;top:439px;width:2px;height:180px;background:#b52f0c;"></div>
<div style="left:439px;top:370px;width:2px;height:249px;background:#b52f0c;"></div>
<div style="left:633px;top:370px;width:2px;height:249px;background:#b52f0c;"></div>
<div style="left:536px;top:439px;width:2px;height:180px;background:#b52f0c;"></div>
<div style="left:728px;top:439px;width:2px;height:180px;background:#b52f0c;"></div>
<div style="left:80px;top:475px;width:457.5px;height:1px;background:#b52f0c;"></div>
<div style="left:634px;top:475px;width:174.5px;height:1px;background:#b52f0c;"></div>
<div style="left:80px;top:511px;width:457.5px;height:1px;background:#b52f0c;"></div>
<div style="left:634px;top:511px;width:174.5px;height:1px;background:#b52f0c;"></div>
<div style="left:80px;top:547px;width:457.5px;height:1px;background:#b52f0c;"></div>
<div style="left:634px;top:547px;width:174.5px;height:1px;background:#b52f0c;"></div>
<div style="left:80px;top:583px;width:457.5px;height:1px;background:#b52f0c;"></div>
<div style="left:634px;top:583px;width:174.5px;height:1px;background:#b52f0c;"></div>
<span class="t" style="left:176.5px;top:390.0px;line-height:29px;font-size:22px;letter-spacing:0.09px;font-weight:bold;">Leitungswasser</span>
<span class="t" style="left:453.5px;top:374.0px;line-height:29px;font-size:22px;letter-spacing:0.12px;font-weight:bold;">Leitungswasser</span>
<span class="t" style="left:505.0px;top:407.0px;line-height:29px;font-size:22px;letter-spacing:0.59px;font-weight:bold;">× 1,0</span>
<span class="t" style="left:655.5px;top:374.0px;line-height:29px;font-size:22px;letter-spacing:0.49px;font-weight:bold;">Wasser zum</span>
<span class="t" style="left:685.0px;top:407.0px;line-height:29px;font-size:22px;letter-spacing:0.23px;font-weight:bold;">Ansatz</span>
<span class="t r" style="left:301.5px;top:444.5px;line-height:25px;font-size:19px;letter-spacing:1.19px;">Nitrat:</span>
<span class="t r" style="left:396.1px;top:444.5px;line-height:25px;font-size:19px;letter-spacing:1.00px;">8,7</span>
<span class="t r" style="left:493.1px;top:444.5px;line-height:25px;font-size:19px;letter-spacing:1.00px;">8,7</span>
<span class="t r" style="left:684.1px;top:444.5px;line-height:25px;font-size:19px;letter-spacing:1.00px;">8,7</span>
<span class="t r" style="left:732.5px;top:444.5px;line-height:25px;font-size:19px;letter-spacing:1.53px;">mg/l</span>
<span class="t r" style="left:288.0px;top:480.5px;line-height:25px;font-size:19px;letter-spacing:1.31px;">Kalium:</span>
<span class="t r" style="left:396.1px;top:480.5px;line-height:25px;font-size:19px;letter-spacing:1.00px;">1,0</span>
<span class="t r" style="left:493.1px;top:480.5px;line-height:25px;font-size:19px;letter-spacing:1.00px;">1,0</span>
<span class="t r" style="left:684.1px;top:480.5px;line-height:25px;font-size:19px;letter-spacing:1.00px;">1,0</span>
<span class="t r" style="left:732.5px;top:480.5px;line-height:25px;font-size:19px;letter-spacing:1.53px;">mg/l</span>
<span class="t r" style="left:274.0px;top:516.5px;line-height:25px;font-size:19px;letter-spacing:1.57px;">Calcium:</span>
<span class="t r" style="left:384.5px;top:516.5px;line-height:25px;font-size:19px;letter-spacing:1.00px;">67,0</span>
<span class="t r" style="left:481.5px;top:516.5px;line-height:25px;font-size:19px;letter-spacing:1.00px;">67,0</span>
<span class="t r" style="left:672.5px;top:516.5px;line-height:25px;font-size:19px;letter-spacing:1.00px;">67,0</span>
<span class="t r" style="left:732.5px;top:516.5px;line-height:25px;font-size:19px;letter-spacing:1.53px;">mg/l</span>
<span class="t r" style="left:244.5px;top:552.5px;line-height:25px;font-size:19px;letter-spacing:1.25px;">Magnesium:</span>
<span class="t r" style="left:384.5px;top:552.5px;line-height:25px;font-size:19px;letter-spacing:1.00px;">17,0</span>
<span class="t r" style="left:481.5px;top:552.5px;line-height:25px;font-size:19px;letter-spacing:1.00px;">17,0</span>
<span class="t r" style="left:672.5px;top:552.5px;line-height:25px;font-size:19px;letter-spacing:1.00px;">17,0</span>
<span class="t r" style="left:732.5px;top:552.5px;line-height:25px;font-size:19px;letter-spacing:1.53px;">mg/l</span>
<span class="t r" style="left:299.0px;top:588.5px;line-height:25px;font-size:19px;letter-spacing:1.09px;">Sulfat:</span>
<span class="t r" style="left:384.5px;top:588.5px;line-height:25px;font-size:19px;letter-spacing:1.00px;">18,0</span>
<span class="t r" style="left:481.5px;top:588.5px;line-height:25px;font-size:19px;letter-spacing:1.00px;">18,0</span>
<span class="t r" style="left:672.5px;top:588.5px;line-height:25px;font-size:19px;letter-spacing:1.00px;">18,0</span>
<span class="t r" style="left:732.5px;top:588.5px;line-height:25px;font-size:19px;letter-spacing:1.53px;">mg/l</span>
<div style="left:546px;top:494.3px;width:69px;height:68.7px;background:#f0f0f0;box-shadow:inset 1px 1px 0 #fff,inset -1px -1px 0 #6d6d6d,inset -2px -2px 0 #a9a9a9;"></div>
<span class="t" style="left:566.8px;top:504.8px;line-height:47px;font-size:36px;font-family:'DejaVu Sans',sans-serif;">⇒</span>
<div style="left:78px;top:634px;width:732px;height:3px;background:#b52f0c;"></div>
<div style="left:78px;top:862px;width:732px;height:3px;background:#b52f0c;"></div>
<div style="left:78px;top:635px;width:3px;height:228px;background:#b52f0c;"></div>
<div style="left:807px;top:635px;width:3px;height:228px;background:#b52f0c;"></div>
<div style="left:439px;top:635px;width:2px;height:228px;background:#b52f0c;"></div>
<div style="left:80px;top:682px;width:728.5px;height:2px;background:#b52f0c;"></div>
<div style="left:265px;top:683px;width:2px;height:180px;background:#b52f0c;"></div>
<div style="left:80px;top:719px;width:360.5px;height:1px;background:#b52f0c;"></div>
<div style="left:80px;top:755px;width:360.5px;height:1px;background:#b52f0c;"></div>
<div style="left:80px;top:791px;width:360.5px;height:1px;background:#b52f0c;"></div>
<div style="left:80px;top:827px;width:360.5px;height:1px;background:#b52f0c;"></div>
<div style="left:440.5px;top:718px;width:368px;height:2px;background:#b52f0c;"></div>
<div style="left:440.5px;top:754px;width:368px;height:2px;background:#b52f0c;"></div>
<div style="left:440.5px;top:826px;width:368px;height:2px;background:#b52f0c;"></div>
<div style="left:633px;top:682px;width:176px;height:2px;background:#b52f0c;"></div>
<div style="left:633px;top:718px;width:176px;height:2px;background:#b52f0c;"></div>
<div style="left:633px;top:683px;width:2px;height:36px;background:#b52f0c;"></div>
<div style="left:807px;top:683px;width:2px;height:36px;background:#b52f0c;"></div>
<span class="t" style="left:238.0px;top:644.5px;line-height:29px;font-size:22px;letter-spacing:0.33px;font-weight:bold;">gewünscht:</span>
<span class="t" style="left:481.0px;top:646.5px;line-height:25px;font-size:19px;letter-spacing:0.89px;font-weight:bold;">Anteil NH<span class="sb">4</span>-N aus (NH<span class="sb">4</span>)H<span class="sb">2</span>PO<span class="sb">4:</span></span>
<span class="t r" style="left:153.0px;top:688.5px;line-height:25px;font-size:19px;letter-spacing:1.52px;">Gesamt-N:</span>
<span class="t r" style="left:312.5px;top:688.5px;line-height:25px;font-size:19px;letter-spacing:1.00px;">75,0</span>
<span class="t r" style="left:376.0px;top:688.5px;line-height:25px;font-size:19px;letter-spacing:1.78px;">mg/l</span>
<div style="left:444px;top:688.5px;width:29px;height:28px;background:#f0f0f0;box-shadow:inset 1px 1px 0 #fff,inset -1px -1px 0 #6d6d6d,inset -2px -2px 0 #a9a9a9;"></div>
<div style="left:453.7px;top:697.7px;width:8.6px;height:8.6px;border-radius:50%;background:#000"></div>
<span class="t r" style="left:563.5px;top:688.5px;line-height:25px;font-size:19px;letter-spacing:1.26px;">NH<span class="sb">4</span>-N:</span>
<span class="t r" style="left:683.0px;top:688.5px;line-height:25px;font-size:19px;letter-spacing:1.31px;">6,53 %</span>
<span class="t" style="left:167.5px;top:726.5px;line-height:21px;font-size:16.5px;letter-spacing:0.82px;font-weight:bold;">⇒ Nitrat-N:</span>
<span class="t" style="left:320.5px;top:726.5px;line-height:21px;font-size:16.5px;letter-spacing:0.10px;font-weight:bold;">70,1</span>
<span class="t" style="left:376.0px;top:726.5px;line-height:21px;font-size:16.5px;letter-spacing:0.77px;font-weight:bold;">mg/l</span>
<span class="t" style="left:562.5px;top:726.5px;line-height:21px;font-size:16.5px;letter-spacing:0.49px;font-weight:bold;">NH<span class="sb">4</span>-N ≤ 19,74%</span>
<span class="t r" style="left:239.5px;top:760.5px;line-height:25px;font-size:19px;letter-spacing:1.00px;">P:</span>
<span class="t r" style="left:311.0px;top:760.5px;line-height:25px;font-size:19px;letter-spacing:1.19px;">32,73</span>
<span class="t r" style="left:376.0px;top:760.5px;line-height:25px;font-size:19px;letter-spacing:1.78px;">mg/l</span>
<span class="t" style="left:566.5px;top:760.5px;line-height:25px;font-size:19px;letter-spacing:0.87px;font-weight:bold;">NH<span class="sb">4</span>-N für Ca:</span>
<span class="t r" style="left:239.5px;top:796.5px;line-height:25px;font-size:19px;letter-spacing:1.00px;">K:</span>
<span class="t r" style="left:311.0px;top:796.5px;line-height:25px;font-size:19px;letter-spacing:1.19px;">62,26</span>
<span class="t r" style="left:376.0px;top:796.5px;line-height:25px;font-size:19px;letter-spacing:1.78px;">mg/l</span>
<span class="t" style="left:445.5px;top:798.5px;line-height:21px;font-size:16.5px;letter-spacing:0.35px;font-weight:bold;">Ca : Mg [2,488...3,391]:</span>
<span class="t r" style="left:667.5px;top:796.5px;line-height:25px;font-size:19px;letter-spacing:0.70px;">3,0</span>
<span class="t r" style="left:732.0px;top:796.5px;line-height:25px;font-size:19px;letter-spacing:0.61px;">12,64 %</span>
<span class="t" style="left:112.0px;top:834.5px;line-height:21px;font-size:16.5px;letter-spacing:0.50px;font-weight:bold;">S [6,008...19,794]:</span>
<span class="t r" style="left:311.0px;top:832.5px;line-height:25px;font-size:19px;letter-spacing:1.19px;">14,55</span>
<span class="t r" style="left:376.0px;top:832.5px;line-height:25px;font-size:19px;letter-spacing:1.78px;">mg/l</span>
<span class="t" style="left:560.0px;top:834.5px;line-height:21px;font-size:16.5px;letter-spacing:0.15px;font-weight:bold;">(Ca : K = 1,9274)</span>
<div style="left:78px;top:878px;width:732px;height:3px;background:#b52f0c;"></div>
<div style="left:78px;top:950px;width:732px;height:3px;background:#b52f0c;"></div>
<div style="left:78px;top:879px;width:3px;height:72px;background:#b52f0c;"></div>
<div style="left:807px;top:879px;width:3px;height:72px;background:#b52f0c;"></div>
<div style="left:80px;top:914px;width:728.5px;height:2px;background:#b52f0c;"></div>
<div style="left:367px;top:879px;width:2px;height:72px;background:#b52f0c;"></div>
<div style="left:536px;top:879px;width:2px;height:72px;background:#b52f0c;"></div>
<div style="left:266px;top:915px;width:1px;height:36px;background:#b52f0c;"></div>
<div style="left:439px;top:915px;width:2px;height:36px;background:#b52f0c;"></div>
<span class="t" style="left:105.0px;top:885.0px;line-height:24px;font-size:18.5px;letter-spacing:-0.23px;font-weight:bold;">[0,9287...9,2897]</span>
<span class="t" style="left:273.5px;top:884.5px;line-height:25px;font-size:19px;letter-spacing:0.22px;font-weight:bold;">Ca : Mg =</span>
<span class="t r" style="left:438.5px;top:884.5px;line-height:25px;font-size:19px;letter-spacing:0.70px;">3,0</span>
<span class="t" style="left:605.0px;top:885.0px;line-height:24px;font-size:18.5px;letter-spacing:-0.26px;font-weight:bold;">[0,8802...9,6753]</span>
<span class="t" style="left:94.5px;top:922.5px;line-height:21px;font-size:16.5px;letter-spacing:0.54px;font-weight:bold;">Ca [67,0...164,479]:</span>
<span class="t" style="left:275.5px;top:922.5px;line-height:21px;font-size:16.5px;letter-spacing:0.57px;font-weight:bold;">120,0 mg/l</span>
<span class="t" style="left:392.5px;top:922.5px;line-height:21px;font-size:16.5px;letter-spacing:0.19px;font-weight:bold;">3,0</span>
<span class="t" style="left:462.0px;top:922.5px;line-height:21px;font-size:16.5px;letter-spacing:0.59px;font-weight:bold;">2,7289</span>
<div style="left:78px;top:966px;width:732px;height:3px;background:#b52f0c;"></div>
<div style="left:78px;top:1070px;width:732px;height:3px;background:#b52f0c;"></div>
<div style="left:78px;top:967px;width:3px;height:104.5px;background:#b52f0c;"></div>
<div style="left:807px;top:967px;width:3px;height:104.5px;background:#b52f0c;"></div>
<div style="left:439px;top:967px;width:2px;height:106px;background:#b52f0c;"></div>
<div style="left:80px;top:1001px;width:728.5px;height:1px;background:#b52f0c;"></div>
<div style="left:80px;top:1037px;width:728.5px;height:1px;background:#b52f0c;"></div>
<span class="t r" style="left:305.5px;top:971.5px;line-height:25px;font-size:19px;letter-spacing:0.95px;"><b>mit</b> KNO<span class="sb">3</span>:</span>
<span class="t r" style="left:638.5px;top:971.5px;line-height:25px;font-size:19px;letter-spacing:0.82px;"><b>ohne</b> KNO<span class="sb">3</span>:</span>
<span class="t r" style="left:225.5px;top:1006.5px;line-height:25px;font-size:19px;letter-spacing:0.44px;">Mg:</span>
<span class="t" style="left:310.0px;top:1006.5px;line-height:25px;font-size:19px;letter-spacing:1.29px;font-weight:bold;">40,00</span>
<span class="t r" style="left:376.0px;top:1006.5px;line-height:25px;font-size:19px;letter-spacing:1.78px;">mg/l</span>
<span class="t" style="left:670.0px;top:1006.5px;line-height:25px;font-size:19px;letter-spacing:1.19px;font-weight:bold;">41,41</span>
<span class="t r" style="left:736.5px;top:1006.5px;line-height:25px;font-size:19px;letter-spacing:1.53px;">mg/l</span>
<span class="t r" style="left:226.5px;top:1042.5px;line-height:25px;font-size:19px;letter-spacing:0.81px;">Ca:</span>
<span class="t" style="left:299.0px;top:1042.5px;line-height:25px;font-size:19px;letter-spacing:1.15px;font-weight:bold;">120,00</span>
<span class="t r" style="left:376.0px;top:1042.5px;line-height:25px;font-size:19px;letter-spacing:1.78px;">mg/l</span>
<span class="t" style="left:659.0px;top:1042.5px;line-height:25px;font-size:19px;letter-spacing:1.06px;font-weight:bold;">124,23</span>
<span class="t r" style="left:736.5px;top:1042.5px;line-height:25px;font-size:19px;letter-spacing:1.53px;">mg/l</span>
<div style="left:78px;top:1087px;width:732px;height:3px;background:#c00000;"></div>
<div style="left:78px;top:1194px;width:732px;height:3px;background:#c00000;"></div>
<div style="left:78px;top:1088px;width:3px;height:107.5px;background:#c00000;"></div>
<div style="left:807px;top:1088px;width:3px;height:107.5px;background:#c00000;"></div>
<div style="left:80px;top:1123px;width:728.5px;height:2px;background:#c00000;"></div>
<div style="left:80px;top:1160px;width:728.5px;height:1px;background:#c00000;"></div>
<div style="left:367px;top:1088px;width:2px;height:36px;background:#c00000;"></div>
<div style="left:536px;top:1088px;width:2px;height:36px;background:#c00000;"></div>
<div style="left:439px;top:1124px;width:2px;height:72px;background:#c00000;"></div>
<span class="t" style="left:85.5px;top:1094.0px;line-height:24px;font-size:18.5px;letter-spacing:-0.26px;font-weight:bold;">[0,863...1,557...3,662]</span>
<span class="t" style="left:283.5px;top:1093.5px;line-height:25px;font-size:19px;letter-spacing:-0.30px;font-weight:bold;">K : Mg  =</span>
<span class="t r" style="left:426.5px;top:1093.5px;line-height:25px;font-size:19px;letter-spacing:0.99px;">1,557</span>
<span class="t" style="left:585.0px;top:1094.0px;line-height:24px;font-size:18.5px;letter-spacing:-0.24px;font-weight:bold;">[0,818...1,416...3,662]</span>
<span class="t r" style="left:225.5px;top:1129.5px;line-height:25px;font-size:19px;letter-spacing:0.44px;">Mg:</span>
<span class="t" style="left:310.0px;top:1129.5px;line-height:25px;font-size:19px;letter-spacing:1.29px;font-weight:bold;">39,99</span>
<span class="t r" style="left:376.0px;top:1129.5px;line-height:25px;font-size:19px;letter-spacing:1.78px;">mg/l</span>
<span class="t" style="left:670.0px;top:1129.5px;line-height:25px;font-size:19px;letter-spacing:1.29px;font-weight:bold;">39,99</span>
<span class="t r" style="left:736.5px;top:1129.5px;line-height:25px;font-size:19px;letter-spacing:1.53px;">mg/l</span>
<span class="t r" style="left:226.5px;top:1165.5px;line-height:25px;font-size:19px;letter-spacing:0.81px;">Ca:</span>
<span class="t" style="left:299.0px;top:1165.5px;line-height:25px;font-size:19px;letter-spacing:1.15px;font-weight:bold;">120,02</span>
<span class="t r" style="left:376.0px;top:1165.5px;line-height:25px;font-size:19px;letter-spacing:1.78px;">mg/l</span>
<span class="t" style="left:659.0px;top:1165.5px;line-height:25px;font-size:19px;letter-spacing:1.15px;font-weight:bold;">126,57</span>
<span class="t r" style="left:736.5px;top:1165.5px;line-height:25px;font-size:19px;letter-spacing:1.53px;">mg/l</span>
<div style="left:78px;top:1211px;width:732px;height:3px;background:#c00000;"></div>
<div style="left:78px;top:1355px;width:732px;height:3px;background:#c00000;"></div>
<div style="left:78px;top:1212px;width:3px;height:144px;background:#c00000;"></div>
<div style="left:807px;top:1212px;width:3px;height:144px;background:#c00000;"></div>
<div style="left:80px;top:1247px;width:728.5px;height:2px;background:#c00000;"></div>
<div style="left:80px;top:1283px;width:728.5px;height:2px;background:#c00000;"></div>
<div style="left:80px;top:1320px;width:728.5px;height:1px;background:#c00000;"></div>
<div style="left:367px;top:1212px;width:2px;height:72px;background:#c00000;"></div>
<div style="left:536px;top:1212px;width:2px;height:36px;background:#c00000;"></div>
<div style="left:439px;top:1248px;width:2px;height:108px;background:#c00000;"></div>
<span class="t" style="left:115.0px;top:1218.0px;line-height:24px;font-size:18.5px;letter-spacing:-0.22px;font-weight:bold;">[1,076...2,642]</span>
<span class="t" style="left:288.5px;top:1217.5px;line-height:25px;font-size:19px;letter-spacing:0.09px;font-weight:bold;">Ca : K =</span>
<span class="t r" style="left:421.0px;top:1217.5px;line-height:25px;font-size:19px;letter-spacing:0.98px;">1,9274</span>
<span class="t" style="left:100.5px;top:1254.0px;line-height:24px;font-size:18.5px;letter-spacing:-0.26px;font-weight:bold;">[2,729...3,0...3,58]</span>
<span class="t" style="left:273.5px;top:1253.5px;line-height:25px;font-size:19px;letter-spacing:0.22px;font-weight:bold;">Ca : Mg =</span>
<span class="t r" style="left:390.5px;top:1253.5px;line-height:25px;font-size:19px;letter-spacing:0.70px;">3,0</span>
<span class="t r" style="left:225.5px;top:1289.5px;line-height:25px;font-size:19px;letter-spacing:0.44px;">Mg:</span>
<span class="t" style="left:310.0px;top:1289.5px;line-height:25px;font-size:19px;letter-spacing:1.29px;font-weight:bold;">40,00</span>
<span class="t r" style="left:376.0px;top:1289.5px;line-height:25px;font-size:19px;letter-spacing:1.78px;">mg/l</span>
<span class="t r" style="left:226.5px;top:1325.5px;line-height:25px;font-size:19px;letter-spacing:0.81px;">Ca:</span>
<span class="t" style="left:299.0px;top:1325.5px;line-height:25px;font-size:19px;letter-spacing:1.15px;font-weight:bold;">120,00</span>
<span class="t r" style="left:376.0px;top:1325.5px;line-height:25px;font-size:19px;letter-spacing:1.78px;">mg/l</span>
<div style="left:845px;top:369px;width:514px;height:3px;background:#c00000;"></div>
<div style="left:845px;top:618px;width:514px;height:3px;background:#c00000;"></div>
<div style="left:845px;top:370.5px;width:3px;height:248.5px;background:#c00000;"></div>
<div style="left:1356px;top:370.5px;width:3px;height:248.5px;background:#c00000;"></div>
<div style="left:846.5px;top:438px;width:511px;height:2px;background:#c00000;"></div>
<div style="left:948.5px;top:475px;width:409px;height:1px;background:#c00000;"></div>
<div style="left:948.5px;top:511px;width:409px;height:1px;background:#c00000;"></div>
<div style="left:846.5px;top:546px;width:511px;height:2px;background:#c00000;"></div>
<div style="left:846.5px;top:582px;width:511px;height:2px;background:#c00000;"></div>
<div style="left:948px;top:439px;width:1px;height:108px;background:#c00000;"></div>
<div style="left:1082px;top:439px;width:1px;height:108px;background:#c00000;"></div>
<div style="left:1216px;top:439px;width:1px;height:180px;background:#c00000;"></div>
<div style="left:947px;top:438px;width:136px;height:2px;background:#c00000;"></div>
<div style="left:947px;top:474px;width:136px;height:2px;background:#c00000;"></div>
<div style="left:947px;top:439px;width:2px;height:36px;background:#c00000;"></div>
<div style="left:1081px;top:439px;width:2px;height:36px;background:#c00000;"></div>
<div style="left:1081px;top:474px;width:136px;height:2px;background:#c00000;"></div>
<div style="left:1081px;top:510px;width:136px;height:2px;background:#c00000;"></div>
<div style="left:1081px;top:475px;width:2px;height:36px;background:#c00000;"></div>
<div style="left:1215px;top:475px;width:2px;height:36px;background:#c00000;"></div>
<div style="left:1215px;top:510px;width:143px;height:2px;background:#c00000;"></div>
<div style="left:1215px;top:546px;width:143px;height:2px;background:#c00000;"></div>
<div style="left:1215px;top:511px;width:2px;height:36px;background:#c00000;"></div>
<div style="left:1356px;top:511px;width:2px;height:36px;background:#c00000;"></div>
<span class="t" style="left:880.0px;top:390.0px;line-height:29px;font-size:22px;letter-spacing:-0.28px;font-weight:bold;">NPK =</span>
<span class="t" style="left:986.0px;top:390.0px;line-height:29px;font-size:22px;letter-spacing:0.31px;font-weight:bold;">1,0</span>
<span class="t r" style="left:1065.4px;top:392.0px;line-height:29px;font-size:22px;letter-spacing:1.00px;">:</span>
<span class="t r" style="left:1199.4px;top:392.0px;line-height:29px;font-size:22px;letter-spacing:1.00px;">:</span>
<span class="t" style="left:1120.0px;top:373.0px;line-height:29px;font-size:22px;letter-spacing:0.31px;font-weight:bold;">1,0</span>
<span class="t r" style="left:1114.0px;top:413.0px;line-height:20px;font-size:15.5px;letter-spacing:0.94px;">1,483</span>
<span class="t" style="left:1272.0px;top:390.0px;line-height:29px;font-size:22px;letter-spacing:0.31px;font-weight:bold;">1,0</span>
<div style="left:872px;top:444.5px;width:29px;height:27px;background:#f0f0f0;box-shadow:inset 1px 1px 0 #fff,inset -1px -1px 0 #6d6d6d,inset -2px -2px 0 #a9a9a9;"></div>
<div style="left:881.7px;top:453.2px;width:8.6px;height:8.6px;border-radius:50%;background:#000"></div>
<div style="left:872px;top:480.5px;width:29px;height:27px;background:#f0f0f0;box-shadow:inset 1px 1px 0 #fff,inset -1px -1px 0 #6d6d6d,inset -2px -2px 0 #a9a9a9;"></div>
<div style="left:881.7px;top:489.2px;width:8.6px;height:8.6px;border-radius:50%;background:#000"></div>
<div style="left:872px;top:516.5px;width:29px;height:27px;background:#f0f0f0;box-shadow:inset 1px 1px 0 #fff,inset -1px -1px 0 #6d6d6d,inset -2px -2px 0 #a9a9a9;"></div>
<div style="left:881.7px;top:525.2px;width:8.6px;height:8.6px;border-radius:50%;background:#000"></div>
<span class="t" style="left:996.0px;top:444.5px;line-height:25px;font-size:19px;letter-spacing:1.09px;font-weight:bold;">75,00</span>
<span class="t r" style="left:1130.5px;top:444.5px;line-height:25px;font-size:19px;letter-spacing:0.99px;">32,73</span>
<span class="t r" style="left:1260.5px;top:444.5px;line-height:25px;font-size:19px;letter-spacing:0.99px;">62,26</span>
<span class="t r" style="left:996.5px;top:480.5px;line-height:25px;font-size:19px;letter-spacing:0.99px;">40,01</span>
<span class="t" style="left:1130.0px;top:480.5px;line-height:25px;font-size:19px;letter-spacing:1.19px;font-weight:bold;">17,46</span>
<span class="t r" style="left:1260.5px;top:480.5px;line-height:25px;font-size:19px;letter-spacing:0.99px;">33,21</span>
<span class="t r" style="left:996.5px;top:516.5px;line-height:25px;font-size:19px;letter-spacing:0.99px;">80,71</span>
<span class="t r" style="left:1130.5px;top:516.5px;line-height:25px;font-size:19px;letter-spacing:0.99px;">35,22</span>
<span class="t" style="left:1260.5px;top:516.5px;line-height:25px;font-size:19px;letter-spacing:1.19px;font-weight:bold;">67,00</span>
<span class="t" style="left:888.0px;top:552.5px;line-height:25px;font-size:19px;letter-spacing:0.89px;font-weight:bold;">NH<span class="sb">4</span>-N für Ca</span>
<span class="t" style="left:1054.5px;top:553.5px;line-height:23px;font-size:17.5px;letter-spacing:0.15px;font-weight:bold;">[101,716...129,046]:</span>
<span class="t r" style="left:1257.5px;top:552.5px;line-height:25px;font-size:19px;letter-spacing:1.03px;">6,53%</span>
<span class="t" style="left:912.5px;top:588.5px;line-height:25px;font-size:19px;letter-spacing:0.39px;font-weight:bold;">S für Ca</span>
<span class="t" style="left:1091.5px;top:589.5px;line-height:23px;font-size:17.5px;letter-spacing:0.12px;font-weight:bold;">[2,729...3,579]:</span>
<span class="t r" style="left:1255.0px;top:588.5px;line-height:25px;font-size:19px;letter-spacing:0.81px;">14,551</span>
<div style="left:947px;top:369px;width:104px;height:68px;border:2px solid #10733c"></div>
<div style="left:1049px;top:435px;width:8px;height:8px;background:#fff;"></div>
<div style="left:1050px;top:436px;width:6px;height:6px;background:#10733c;"></div>
<div style="left:845px;top:634px;width:514px;height:3px;background:#c00000;"></div>
<div style="left:845px;top:718px;width:514px;height:3px;background:#c00000;"></div>
<div style="left:845px;top:635px;width:3px;height:84px;background:#c00000;"></div>
<div style="left:1356px;top:635px;width:3px;height:84px;background:#c00000;"></div>
<div style="left:846.5px;top:682px;width:511px;height:2px;background:#c00000;"></div>
<div style="left:948px;top:683px;width:1px;height:36px;background:#c00000;"></div>
<div style="left:1082px;top:683px;width:1px;height:36px;background:#c00000;"></div>
<div style="left:1216px;top:683px;width:1px;height:36px;background:#c00000;"></div>
<span class="t" style="left:892.5px;top:648.5px;line-height:21px;font-size:16.5px;letter-spacing:0.43px;font-weight:bold;">[mg/l ]</span>
<span class="t" style="left:1007.9px;top:645.5px;line-height:27px;font-size:21px;letter-spacing:0.50px;font-weight:bold;">N</span>
<span class="t" style="left:1118.0px;top:645.5px;line-height:27px;font-size:21px;letter-spacing:0.74px;font-weight:bold;">PO<span class="sb">4</span>-P</span>
<span class="t" style="left:1280.7px;top:647.5px;line-height:23px;font-size:17.5px;letter-spacing:0.50px;font-weight:bold;">K</span>
<div style="left:872px;top:687.5px;width:29px;height:28px;background:#f0f0f0;box-shadow:inset 1px 1px 0 #fff,inset -1px -1px 0 #6d6d6d,inset -2px -2px 0 #a9a9a9;"></div>
<div style="left:881.7px;top:696.7px;width:8.6px;height:8.6px;border-radius:50%;background:#000"></div>
<span class="t r" style="left:999.0px;top:688.5px;line-height:25px;font-size:19px;letter-spacing:0.77px;">100</span>
<span class="t r" style="left:1138.5px;top:688.5px;line-height:25px;font-size:19px;letter-spacing:0.18px;">30</span>
<span class="t r" style="left:1275.5px;top:688.5px;line-height:25px;font-size:19px;letter-spacing:0.43px;">80</span>
<div style="left:845px;top:754px;width:514px;height:3px;background:#c00000;"></div>
<div style="left:845px;top:826px;width:514px;height:3px;background:#c00000;"></div>
<div style="left:845px;top:755px;width:3px;height:72px;background:#c00000;"></div>
<div style="left:1356px;top:755px;width:3px;height:72px;background:#c00000;"></div>
<div style="left:947px;top:755px;width:2px;height:72px;background:#c00000;"></div>
<div style="left:948.5px;top:791px;width:409px;height:1px;background:#c00000;"></div>
<div style="left:876px;top:772px;width:40px;height:40px;background:#f0f0f0;box-shadow:inset 1px 1px 0 #fff,inset -1px -1px 0 #6d6d6d,inset -2px -2px 0 #a9a9a9;"></div>
<div style="left:888.1px;top:784.1px;width:14.8px;height:14.8px;border-radius:50%;background:#000"></div>
<span class="t r" style="left:972.5px;top:760.5px;line-height:25px;font-size:19px;letter-spacing:0.32px;">NO<span class="sb">3</span> : PO<span class="sb">4</span> =</span>
<span class="t r" style="left:1124.0px;top:760.5px;line-height:25px;font-size:19px;letter-spacing:0.43px;">10</span>
<span class="t r" style="left:1199.9px;top:760.5px;line-height:25px;font-size:19px;letter-spacing:1.00px;">:</span>
<span class="t r" style="left:1280.7px;top:760.5px;line-height:25px;font-size:19px;letter-spacing:1.00px;">1</span>
<span class="t r" style="left:997.0px;top:796.5px;line-height:25px;font-size:19px;letter-spacing:0.10px;">NO<span class="sb">3</span> : K =</span>
<span class="t r" style="left:1124.0px;top:796.5px;line-height:25px;font-size:19px;letter-spacing:0.43px;">10</span>
<span class="t r" style="left:1199.9px;top:796.5px;line-height:25px;font-size:19px;letter-spacing:1.00px;">:</span>
<span class="t r" style="left:1280.7px;top:796.5px;line-height:25px;font-size:19px;letter-spacing:1.00px;">1</span>
<div style="left:845px;top:878px;width:514px;height:3px;background:#c00000;"></div>
<div style="left:845px;top:950px;width:514px;height:3px;background:#c00000;"></div>
<div style="left:845px;top:879px;width:3px;height:72px;background:#c00000;"></div>
<div style="left:1356px;top:879px;width:3px;height:72px;background:#c00000;"></div>
<div style="left:846.5px;top:915px;width:511px;height:1px;background:#c00000;"></div>
<div style="left:1082px;top:879px;width:1px;height:72px;background:#c00000;"></div>
<span class="t" style="left:883.0px;top:886.0px;line-height:22px;font-size:17px;letter-spacing:0.32px;font-weight:bold;">[147,248] Ca ≤ 164,479:</span>
<span class="t r" style="left:1148.0px;top:884.5px;line-height:25px;font-size:19px;letter-spacing:0.89px;">120,0</span>
<span class="t r" style="left:1221.0px;top:884.5px;line-height:25px;font-size:19px;letter-spacing:1.40px;">mg/l</span>
<span class="t" style="left:900.5px;top:922.0px;line-height:22px;font-size:17px;letter-spacing:0.15px;font-weight:bold;">33,524 ≤ Mg ≤ 43,974:</span>
<span class="t r" style="left:1159.5px;top:920.5px;line-height:25px;font-size:19px;letter-spacing:0.88px;">35,0</span>
<span class="t r" style="left:1221.0px;top:920.5px;line-height:25px;font-size:19px;letter-spacing:1.40px;">mg/l</span>
<div style="left:845px;top:966px;width:514px;height:3px;background:#c00000;"></div>
<div style="left:845px;top:1071px;width:514px;height:3px;background:#c00000;"></div>
<div style="left:845px;top:967px;width:3px;height:105px;background:#c00000;"></div>
<div style="left:1356px;top:967px;width:3px;height:105px;background:#c00000;"></div>
<div style="left:846.5px;top:1001px;width:511px;height:1px;background:#c00000;"></div>
<div style="left:846.5px;top:1037px;width:511px;height:1px;background:#c00000;"></div>
<span class="t r" style="left:994.5px;top:971.5px;line-height:25px;font-size:19px;letter-spacing:0.12px;">Ca : Mg =</span>
<span class="t r" style="left:1121.0px;top:971.5px;line-height:25px;font-size:19px;letter-spacing:0.53px;">4,0</span>
<span class="t" style="left:1209.0px;top:973.0px;line-height:22px;font-size:17px;letter-spacing:0.40px;font-weight:bold;">[3,7553...7,059]</span>
<span class="t r" style="left:1009.5px;top:1006.5px;line-height:25px;font-size:19px;letter-spacing:-0.02px;">Ca : K =</span>
<span class="t r" style="left:1109.0px;top:1006.5px;line-height:25px;font-size:19px;letter-spacing:0.89px;">1,927</span>
<span class="t" style="left:1209.0px;top:1008.0px;line-height:22px;font-size:17px;letter-spacing:0.40px;font-weight:bold;">[1,607...1,9641]</span>
<span class="t r" style="left:942.5px;top:1042.5px;line-height:25px;font-size:19px;letter-spacing:0.87px;">Anteil NH<span class="sb">4</span>-N =</span>
<span class="t r" style="left:1099.5px;top:1042.5px;line-height:25px;font-size:19px;letter-spacing:1.09px;">25,00%</span>
<span class="t" style="left:1195.0px;top:1044.0px;line-height:22px;font-size:17px;letter-spacing:0.32px;font-weight:bold;">[19,735...28,005 %]</span>
<div style="left:845px;top:1087px;width:514px;height:3px;background:#c00000;"></div>
<div style="left:845px;top:1195px;width:514px;height:3px;background:#c00000;"></div>
<div style="left:845px;top:1088px;width:3px;height:108px;background:#c00000;"></div>
<div style="left:1356px;top:1088px;width:3px;height:108px;background:#c00000;"></div>
<div style="left:846.5px;top:1124px;width:511px;height:1px;background:#c00000;"></div>
<div style="left:846.5px;top:1160px;width:511px;height:1px;background:#c00000;"></div>
<span class="t r" style="left:945.5px;top:1093.5px;line-height:25px;font-size:19px;letter-spacing:0.26px;">Max. Ca : Mg =</span>
<span class="t" style="left:1117.0px;top:1093.5px;line-height:25px;font-size:19px;letter-spacing:0.86px;font-weight:bold;">0,9922  ...  8,8419</span>
<span class="t r" style="left:960.5px;top:1129.5px;line-height:25px;font-size:19px;letter-spacing:0.18px;">Max. Ca : K =</span>
<span class="t" style="left:1117.5px;top:1129.5px;line-height:25px;font-size:19px;letter-spacing:0.83px;font-weight:bold;">1,0761  ...  2,4142</span>
<span class="t r" style="left:893.5px;top:1165.5px;line-height:25px;font-size:19px;letter-spacing:0.83px;">Max. Anteil NH<span class="sb">4</span>-N =</span>
<span class="t" style="left:1105.5px;top:1165.5px;line-height:25px;font-size:19px;letter-spacing:0.83px;font-weight:bold;">19,7354  ...  97,3796 %</span>
<div style="left:845px;top:1211px;width:514px;height:3px;background:#c00000;"></div>
<div style="left:845px;top:1246px;width:514px;height:3px;background:#c00000;"></div>
<div style="left:845px;top:1212px;width:3px;height:35.5px;background:#c00000;"></div>
<div style="left:1356px;top:1212px;width:3px;height:35.5px;background:#c00000;"></div>
<span class="t r" style="left:1035.5px;top:1217.5px;line-height:25px;font-size:19px;letter-spacing:0.24px;">O2 ≤</span>
<span class="t" style="left:1125.5px;top:1217.5px;line-height:25px;font-size:19px;letter-spacing:1.29px;font-weight:bold;">1,419</span>
<div style="left:845px;top:1283px;width:514px;height:3px;background:#c00000;"></div>
<div style="left:845px;top:1355px;width:514px;height:3px;background:#c00000;"></div>
<div style="left:845px;top:1284px;width:3px;height:72px;background:#c00000;"></div>
<div style="left:1356px;top:1284px;width:3px;height:72px;background:#c00000;"></div>
<div style="left:846.5px;top:1320px;width:511px;height:1px;background:#c00000;"></div>
<span class="t r" style="left:1042.5px;top:1289.5px;line-height:25px;font-size:19px;letter-spacing:0.81px;">Ca:</span>
<span class="t" style="left:1118.0px;top:1289.5px;line-height:25px;font-size:19px;letter-spacing:1.23px;font-weight:bold;">120,00</span>
<span class="t r" style="left:1195.5px;top:1289.5px;line-height:25px;font-size:19px;letter-spacing:1.53px;">mg/l</span>
<span class="t r" style="left:1041.5px;top:1325.5px;line-height:25px;font-size:19px;letter-spacing:0.44px;">Mg:</span>
<span class="t" style="left:1129.5px;top:1325.5px;line-height:25px;font-size:19px;letter-spacing:1.29px;font-weight:bold;">30,00</span>
<span class="t r" style="left:1195.5px;top:1325.5px;line-height:25px;font-size:19px;letter-spacing:1.53px;">mg/l</span>
<div style="left:1429.5px;top:438px;width:1008.5px;height:2px;background:#000;"></div>
<div style="left:1547px;top:370px;width:2px;height:545px;background:#000;"></div>
<div style="left:1675px;top:405px;width:1px;height:510px;background:#000;"></div>
<div style="left:1801px;top:370px;width:2px;height:545px;background:#000;"></div>
<div style="left:1929px;top:405px;width:1px;height:510px;background:#000;"></div>
<div style="left:2055px;top:370px;width:2px;height:545px;background:#000;"></div>
<div style="left:2182px;top:370px;width:2px;height:545px;background:#000;"></div>
<div style="left:2309px;top:354px;width:2px;height:561px;background:#000;"></div>
<span class="t r" style="left:1593.5px;top:375.0px;line-height:25px;font-size:19px;letter-spacing:1.11px;">Ca:Mg-Verhältnis</span>
<span class="t r" style="left:1854.5px;top:375.0px;line-height:25px;font-size:19px;letter-spacing:1.03px;">K:Mg-Verhältnis</span>
<span class="t r" style="left:1571.5px;top:410.5px;line-height:25px;font-size:19px;letter-spacing:0.97px;">m. KNO<span class="sb">3</span></span>
<span class="t r" style="left:1702.0px;top:410.5px;line-height:25px;font-size:19px;letter-spacing:0.79px;">o. KNO<span class="sb">3</span></span>
<span class="t r" style="left:1825.5px;top:410.5px;line-height:25px;font-size:19px;letter-spacing:0.97px;">m. KNO<span class="sb">3</span></span>
<span class="t r" style="left:1956.0px;top:410.5px;line-height:25px;font-size:19px;letter-spacing:0.79px;">o. KNO<span class="sb">3</span></span>
<span class="t r" style="left:2097.5px;top:392.0px;line-height:25px;font-size:19px;letter-spacing:0.69px;">Ca:K</span>
<span class="t r" style="left:2209.5px;top:392.0px;line-height:25px;font-size:19px;letter-spacing:0.30px;">Ca &amp; Mg</span>
<span class="t r" style="left:2331.5px;top:392.0px;line-height:25px;font-size:19px;letter-spacing:1.56px;">NO<span class="sb">3</span>/NH<span class="sb">4</span></span>
<span class="t" style="left:1455.5px;top:480.5px;line-height:25px;font-size:19px;letter-spacing:1.02px;font-weight:bold;">NO<span class="sb">3</span><span class="sp">-</span>-N:</span>
<span class="t" style="left:1453.0px;top:516.5px;line-height:25px;font-size:19px;letter-spacing:1.06px;font-weight:bold;">NH<span class="sb">4</span><span class="sp">+</span>-N:</span>
<span class="t" style="left:1509.5px;top:552.5px;line-height:25px;font-size:19px;letter-spacing:0.50px;font-weight:bold;">P:</span>
<span class="t" style="left:1508.5px;top:588.5px;line-height:25px;font-size:19px;letter-spacing:0.50px;font-weight:bold;">K:</span>
<span class="t" style="left:1494.0px;top:646.5px;line-height:25px;font-size:19px;letter-spacing:0.41px;font-weight:bold;">Mg:</span>
<span class="t" style="left:1495.0px;top:688.5px;line-height:25px;font-size:19px;letter-spacing:1.13px;font-weight:bold;">Ca:</span>
<span class="t" style="left:1509.5px;top:724.5px;line-height:25px;font-size:19px;letter-spacing:0.50px;font-weight:bold;">S:</span>
<span class="t" style="left:1490.0px;top:796.5px;line-height:25px;font-size:19px;letter-spacing:0.03px;font-weight:bold;">∑ N:</span>
<span class="t" style="left:1444.0px;top:832.5px;line-height:25px;font-size:19px;letter-spacing:1.34px;font-weight:bold;">NO<span class="sb">3</span>:NH<span class="sb">4</span></span>
<span class="t" style="left:1474.0px;top:884.5px;line-height:25px;font-size:19px;letter-spacing:0.45px;font-weight:bold;">N:P:K</span>
<span class="t r" style="left:1592.4px;top:480.5px;line-height:25px;font-size:19px;letter-spacing:1.00px;">70,101</span>
<span class="t r" style="left:1719.4px;top:480.5px;line-height:25px;font-size:19px;letter-spacing:1.00px;">70,101</span>
<span class="t r" style="left:1846.4px;top:480.5px;line-height:25px;font-size:19px;letter-spacing:1.00px;">70,101</span>
<span class="t r" style="left:1973.4px;top:480.5px;line-height:25px;font-size:19px;letter-spacing:1.00px;">70,101</span>
<span class="t r" style="left:2100.4px;top:480.5px;line-height:25px;font-size:19px;letter-spacing:1.00px;">70,101</span>
<span class="t r" style="left:2227.4px;top:480.5px;line-height:25px;font-size:19px;letter-spacing:1.00px;">70,101</span>
<span class="t r" style="left:2355.0px;top:480.5px;line-height:25px;font-size:19px;letter-spacing:1.00px;">56,25</span>
<span class="t r" style="left:1604.0px;top:516.5px;line-height:25px;font-size:19px;letter-spacing:1.00px;">4,899</span>
<span class="t r" style="left:1731.0px;top:516.5px;line-height:25px;font-size:19px;letter-spacing:1.00px;">4,899</span>
<span class="t r" style="left:1858.0px;top:516.5px;line-height:25px;font-size:19px;letter-spacing:1.00px;">4,899</span>
<span class="t r" style="left:1985.0px;top:516.5px;line-height:25px;font-size:19px;letter-spacing:1.00px;">4,899</span>
<span class="t r" style="left:2112.0px;top:516.5px;line-height:25px;font-size:19px;letter-spacing:1.00px;">4,899</span>
<span class="t r" style="left:2239.0px;top:516.5px;line-height:25px;font-size:19px;letter-spacing:1.00px;">4,899</span>
<span class="t r" style="left:2355.0px;top:516.5px;line-height:25px;font-size:19px;letter-spacing:1.00px;">18,75</span>
<span class="t r" style="left:1592.4px;top:552.5px;line-height:25px;font-size:19px;letter-spacing:1.00px;">32,732</span>
<span class="t r" style="left:1719.4px;top:552.5px;line-height:25px;font-size:19px;letter-spacing:1.00px;">32,732</span>
<span class="t r" style="left:1846.4px;top:552.5px;line-height:25px;font-size:19px;letter-spacing:1.00px;">32,732</span>
<span class="t r" style="left:1973.4px;top:552.5px;line-height:25px;font-size:19px;letter-spacing:1.00px;">32,732</span>
<span class="t r" style="left:2100.4px;top:552.5px;line-height:25px;font-size:19px;letter-spacing:1.00px;">32,732</span>
<span class="t r" style="left:2227.4px;top:552.5px;line-height:25px;font-size:19px;letter-spacing:1.00px;">32,732</span>
<span class="t r" style="left:2354.4px;top:552.5px;line-height:25px;font-size:19px;letter-spacing:1.00px;">32,732</span>
<span class="t r" style="left:1592.4px;top:588.5px;line-height:25px;font-size:19px;letter-spacing:1.00px;">62,261</span>
<span class="t r" style="left:1719.4px;top:588.5px;line-height:25px;font-size:19px;letter-spacing:1.00px;">62,261</span>
<span class="t r" style="left:1846.4px;top:588.5px;line-height:25px;font-size:19px;letter-spacing:1.00px;">62,261</span>
<span class="t r" style="left:1973.4px;top:588.5px;line-height:25px;font-size:19px;letter-spacing:1.00px;">62,261</span>
<span class="t r" style="left:2100.4px;top:588.5px;line-height:25px;font-size:19px;letter-spacing:1.00px;">62,261</span>
<span class="t r" style="left:2227.4px;top:588.5px;line-height:25px;font-size:19px;letter-spacing:1.00px;">62,261</span>
<span class="t r" style="left:2354.4px;top:588.5px;line-height:25px;font-size:19px;letter-spacing:1.00px;">62,261</span>
<span class="t r" style="left:1593.0px;top:646.5px;line-height:25px;font-size:19px;letter-spacing:1.00px;">40,0</span>
<span class="t r" style="left:1720.0px;top:646.5px;line-height:25px;font-size:19px;letter-spacing:1.00px;">41,41</span>
<span class="t r" style="left:1846.4px;top:646.5px;line-height:25px;font-size:19px;letter-spacing:1.00px;">39,988</span>
<span class="t r" style="left:1973.4px;top:646.5px;line-height:25px;font-size:19px;letter-spacing:1.00px;">39,988</span>
<span class="t r" style="left:2100.4px;top:646.5px;line-height:25px;font-size:19px;letter-spacing:1.00px;">40,001</span>
<span class="t r" style="left:2228.0px;top:646.5px;line-height:25px;font-size:19px;letter-spacing:1.00px;">35,0</span>
<span class="t r" style="left:2354.4px;top:646.5px;line-height:25px;font-size:19px;letter-spacing:1.00px;">30,001</span>
<span class="t r" style="left:1581.5px;top:688.5px;line-height:25px;font-size:19px;letter-spacing:1.00px;">120,0</span>
<span class="t r" style="left:1707.8px;top:688.5px;line-height:25px;font-size:19px;letter-spacing:1.00px;">124,229</span>
<span class="t r" style="left:1834.8px;top:688.5px;line-height:25px;font-size:19px;letter-spacing:1.00px;">120,019</span>
<span class="t r" style="left:1961.8px;top:688.5px;line-height:25px;font-size:19px;letter-spacing:1.00px;">126,573</span>
<span class="t r" style="left:2088.8px;top:688.5px;line-height:25px;font-size:19px;letter-spacing:1.00px;">120,002</span>
<span class="t r" style="left:2216.5px;top:688.5px;line-height:25px;font-size:19px;letter-spacing:1.00px;">120,0</span>
<span class="t r" style="left:2342.8px;top:688.5px;line-height:25px;font-size:19px;letter-spacing:1.00px;">120,002</span>
<span class="t r" style="left:1592.4px;top:724.5px;line-height:25px;font-size:19px;letter-spacing:1.00px;">14,551</span>
<span class="t r" style="left:1719.4px;top:724.5px;line-height:25px;font-size:19px;letter-spacing:1.00px;">19,794</span>
<span class="t r" style="left:1846.4px;top:724.5px;line-height:25px;font-size:19px;letter-spacing:1.00px;">14,551</span>
<span class="t r" style="left:1973.4px;top:724.5px;line-height:25px;font-size:19px;letter-spacing:1.00px;">19,794</span>
<span class="t r" style="left:2100.4px;top:724.5px;line-height:25px;font-size:19px;letter-spacing:1.00px;">14,554</span>
<span class="t r" style="left:2239.0px;top:724.5px;line-height:25px;font-size:19px;letter-spacing:1.00px;">7,955</span>
<span class="t r" style="left:2354.4px;top:724.5px;line-height:25px;font-size:19px;letter-spacing:1.00px;">33,069</span>
<span class="t r" style="left:1593.0px;top:796.5px;line-height:25px;font-size:19px;letter-spacing:1.00px;">75,0</span>
<span class="t r" style="left:1720.0px;top:796.5px;line-height:25px;font-size:19px;letter-spacing:1.00px;">75,0</span>
<span class="t r" style="left:1847.0px;top:796.5px;line-height:25px;font-size:19px;letter-spacing:1.00px;">75,0</span>
<span class="t r" style="left:1974.0px;top:796.5px;line-height:25px;font-size:19px;letter-spacing:1.00px;">75,0</span>
<span class="t r" style="left:2101.0px;top:796.5px;line-height:25px;font-size:19px;letter-spacing:1.00px;">75,0</span>
<span class="t r" style="left:2228.0px;top:796.5px;line-height:25px;font-size:19px;letter-spacing:1.00px;">75,0</span>
<span class="t r" style="left:2355.0px;top:796.5px;line-height:25px;font-size:19px;letter-spacing:1.00px;">75,0</span>
<span class="t r" style="left:1585.7px;top:832.5px;line-height:25px;font-size:19px;letter-spacing:1.00px;">93 : 7</span>
<span class="t" style="left:1553.5px;top:886.0px;line-height:22px;font-size:17px;letter-spacing:-0.69px;font-weight:bold;">1,00 : 1,00 : 1,00</span>
<span class="t r" style="left:1712.7px;top:832.5px;line-height:25px;font-size:19px;letter-spacing:1.00px;">93 : 7</span>
<span class="t" style="left:1680.5px;top:886.0px;line-height:22px;font-size:17px;letter-spacing:-0.69px;font-weight:bold;">1,00 : 1,00 : 1,00</span>
<span class="t r" style="left:1839.7px;top:832.5px;line-height:25px;font-size:19px;letter-spacing:1.00px;">93 : 7</span>
<span class="t" style="left:1807.5px;top:886.0px;line-height:22px;font-size:17px;letter-spacing:-0.69px;font-weight:bold;">1,00 : 1,00 : 1,00</span>
<span class="t r" style="left:1966.7px;top:832.5px;line-height:25px;font-size:19px;letter-spacing:1.00px;">93 : 7</span>
<span class="t" style="left:1934.5px;top:886.0px;line-height:22px;font-size:17px;letter-spacing:-0.69px;font-weight:bold;">1,00 : 1,00 : 1,00</span>
<span class="t r" style="left:2093.7px;top:832.5px;line-height:25px;font-size:19px;letter-spacing:1.00px;">93 : 7</span>
<span class="t" style="left:2061.5px;top:886.0px;line-height:22px;font-size:17px;letter-spacing:-0.69px;font-weight:bold;">1,00 : 1,00 : 1,00</span>
<span class="t r" style="left:2220.7px;top:832.5px;line-height:25px;font-size:19px;letter-spacing:1.00px;">93 : 7</span>
<span class="t" style="left:2188.5px;top:886.0px;line-height:22px;font-size:17px;letter-spacing:-0.69px;font-weight:bold;">1,00 : 1,00 : 1,00</span>
<span class="t r" style="left:2341.9px;top:832.5px;line-height:25px;font-size:19px;letter-spacing:1.00px;">75 : 25</span>
<span class="t" style="left:2315.5px;top:886.0px;line-height:22px;font-size:17px;letter-spacing:-0.69px;font-weight:bold;">1,00 : 1,00 : 1,00</span>
<svg style="left:438.5px;top:750px" width="383.5" height="81.5" viewBox="0 0 383.5 81.5" fill="none"><ellipse cx="191.75" cy="40.75" rx="189.95" ry="38.95" stroke="#ea2dc9" stroke-width="3.6"/></svg>
<svg style="left:438px;top:966.5px" width="394.5" height="108" viewBox="0 0 394.5 108" fill="none"><ellipse cx="197.25" cy="54" rx="195.45" ry="52.2" stroke="#ea2dc9" stroke-width="3.6"/></svg>
<div style="left:0px;top:326px;width:2516px;height:28px;background:#505050;"></div>
<span class="t" style="left:54.5px;top:329.0px;line-height:25px;font-size:19.5px;color:#fff;">A</span>
<div style="left:80px;top:326px;width:1px;height:28px;background:#c4c4c4;"></div>
<span class="t" style="left:167.2px;top:329.0px;line-height:25px;font-size:19.5px;color:#fff;">B</span>
<div style="left:266px;top:326px;width:1px;height:28px;background:#c4c4c4;"></div>
<span class="t" style="left:311.0px;top:329.0px;line-height:25px;font-size:19.5px;color:#fff;">C</span>
<div style="left:368px;top:326px;width:1px;height:28px;background:#c4c4c4;"></div>
<span class="t" style="left:398.0px;top:329.0px;line-height:25px;font-size:19.5px;color:#fff;">D</span>
<div style="left:440px;top:326px;width:1px;height:28px;background:#c4c4c4;"></div>
<span class="t" style="left:483.0px;top:329.0px;line-height:25px;font-size:19.5px;color:#fff;">E</span>
<div style="left:537px;top:326px;width:1px;height:28px;background:#c4c4c4;"></div>
<span class="t" style="left:580.3px;top:329.0px;line-height:25px;font-size:19.5px;color:#fff;">F</span>
<div style="left:634px;top:326px;width:1px;height:28px;background:#c4c4c4;"></div>
<span class="t" style="left:674.4px;top:329.0px;line-height:25px;font-size:19.5px;color:#fff;">G</span>
<div style="left:729px;top:326px;width:1px;height:28px;background:#c4c4c4;"></div>
<span class="t" style="left:762.2px;top:329.0px;line-height:25px;font-size:19.5px;color:#fff;">H</span>
<div style="left:808px;top:326px;width:1px;height:28px;background:#c4c4c4;"></div>
<span class="t" style="left:824.3px;top:329.0px;line-height:25px;font-size:19.5px;color:#fff;">I</span>
<div style="left:844px;top:326px;width:1px;height:28px;background:#c4c4c4;"></div>
<span class="t" style="left:893.3px;top:329.0px;line-height:25px;font-size:19.5px;color:#fff;">L</span>
<div style="left:948px;top:326px;width:1px;height:28px;background:#c4c4c4;"></div>
<div style="left:949.5px;top:326px;width:104px;height:28px;background:#666666;"></div>
<div style="left:949.5px;top:352px;width:104px;height:2px;background:#10733c;"></div>
<span class="t" style="left:993.4px;top:329.0px;line-height:25px;font-size:19.5px;color:#fff;">M</span>
<div style="left:1053px;top:326px;width:1px;height:28px;background:#c4c4c4;"></div>
<span class="t" style="left:1061.5px;top:329.0px;line-height:25px;font-size:19.5px;color:#fff;">N</span>
<div style="left:1082px;top:326px;width:1px;height:28px;background:#c4c4c4;"></div>
<span class="t" style="left:1127.9px;top:329.0px;line-height:25px;font-size:19.5px;color:#fff;">O</span>
<div style="left:1187px;top:326px;width:1px;height:28px;background:#c4c4c4;"></div>
<span class="t" style="left:1196.0px;top:329.0px;line-height:25px;font-size:19.5px;color:#fff;">P</span>
<div style="left:1216px;top:326px;width:1px;height:28px;background:#c4c4c4;"></div>
<span class="t" style="left:1279.9px;top:329.0px;line-height:25px;font-size:19.5px;color:#fff;">Q</span>
<div style="left:1357px;top:326px;width:1px;height:28px;background:#c4c4c4;"></div>
<span class="t" style="left:1387.0px;top:329.0px;line-height:25px;font-size:19.5px;color:#fff;">R</span>
<div style="left:1429px;top:326px;width:1px;height:28px;background:#c4c4c4;"></div>
<span class="t" style="left:1483.0px;top:329.0px;line-height:25px;font-size:19.5px;color:#fff;">S</span>
<div style="left:1548px;top:326px;width:1px;height:28px;background:#c4c4c4;"></div>
<span class="t" style="left:1606.5px;top:329.0px;line-height:25px;font-size:19.5px;color:#fff;">T</span>
<div style="left:1675px;top:326px;width:1px;height:28px;background:#c4c4c4;"></div>
<span class="t" style="left:1732.5px;top:329.0px;line-height:25px;font-size:19.5px;color:#fff;">U</span>
<div style="left:1802px;top:326px;width:1px;height:28px;background:#c4c4c4;"></div>
<span class="t" style="left:1860.0px;top:329.0px;line-height:25px;font-size:19.5px;color:#fff;">V</span>
<div style="left:1929px;top:326px;width:1px;height:28px;background:#c4c4c4;"></div>
<span class="t" style="left:1984.3px;top:329.0px;line-height:25px;font-size:19.5px;color:#fff;">W</span>
<div style="left:2056px;top:326px;width:1px;height:28px;background:#c4c4c4;"></div>
<span class="t" style="left:2114.0px;top:329.0px;line-height:25px;font-size:19.5px;color:#fff;">X</span>
<div style="left:2183px;top:326px;width:1px;height:28px;background:#c4c4c4;"></div>
<span class="t" style="left:2241.0px;top:329.0px;line-height:25px;font-size:19.5px;color:#fff;">Y</span>
<div style="left:2310px;top:326px;width:1px;height:28px;background:#c4c4c4;"></div>
<span class="t" style="left:2368.5px;top:329.0px;line-height:25px;font-size:19.5px;color:#fff;">Z</span>
<div style="left:2437px;top:326px;width:1px;height:28px;background:#c4c4c4;"></div>
<span class="t" style="left:2487.0px;top:329.0px;line-height:25px;font-size:19.5px;color:#fff;">AA</span>
<div style="left:848px;top:326px;width:1px;height:28px;background:#c4c4c4;"></div>
<div style="left:41px;top:326px;width:1px;height:28px;background:#c4c4c4;"></div>
<svg style="left:6px;top:328px" width="34" height="26" viewBox="0 0 34 26"><path d="M32 2.500 L32 22.700 L11.800 22.700 Z" fill="#e9e9e9"/></svg>
<div style="left:0px;top:354px;width:42px;height:1514.5px;background:#505050;"></div>
<div style="left:2px;top:355px;width:40px;height:16px;background:#505050;overflow:hidden;border-bottom:1px solid #c4c4c4;box-sizing:border-box"><span class="t" style="left:0;width:39px;text-align:center;top:-12.3px;line-height:26px;font-size:19.500px;color:#fff">1</span></div>
<div style="left:2px;top:371px;width:40px;height:35px;background:#666666;overflow:hidden;border-bottom:1px solid #c4c4c4;box-sizing:border-box"><span class="t" style="left:0;width:39px;text-align:center;top:7.5px;line-height:26px;font-size:19.500px;color:#fff">2</span></div>
<div style="left:40px;top:371px;width:2px;height:35px;background:#10733c;"></div>
<div style="left:2px;top:406px;width:40px;height:34px;background:#666666;overflow:hidden;border-bottom:1px solid #c4c4c4;box-sizing:border-box"><span class="t" style="left:0;width:39px;text-align:center;top:6.5px;line-height:26px;font-size:19.500px;color:#fff">3</span></div>
<div style="left:40px;top:406px;width:2px;height:34px;background:#10733c;"></div>
<div style="left:2px;top:440px;width:40px;height:36px;background:#505050;overflow:hidden;border-bottom:1px solid #c4c4c4;box-sizing:border-box"><span class="t" style="left:0;width:39px;text-align:center;top:6.8px;line-height:26px;font-size:19.500px;color:#fff">4</span></div>
<div style="left:2px;top:476px;width:40px;height:36px;background:#505050;overflow:hidden;border-bottom:1px solid #c4c4c4;box-sizing:border-box"><span class="t" style="left:0;width:39px;text-align:center;top:6.8px;line-height:26px;font-size:19.500px;color:#fff">5</span></div>
<div style="left:2px;top:512px;width:40px;height:36px;background:#505050;overflow:hidden;border-bottom:1px solid #c4c4c4;box-sizing:border-box"><span class="t" style="left:0;width:39px;text-align:center;top:6.8px;line-height:26px;font-size:19.500px;color:#fff">6</span></div>
<div style="left:2px;top:548px;width:40px;height:36px;background:#505050;overflow:hidden;border-bottom:1px solid #c4c4c4;box-sizing:border-box"><span class="t" style="left:0;width:39px;text-align:center;top:6.8px;line-height:26px;font-size:19.500px;color:#fff">7</span></div>
<div style="left:2px;top:584px;width:40px;height:36px;background:#505050;overflow:hidden;border-bottom:1px solid #c4c4c4;box-sizing:border-box"><span class="t" style="left:0;width:39px;text-align:center;top:6.8px;line-height:26px;font-size:19.500px;color:#fff">8</span></div>
<div style="left:2px;top:620px;width:40px;height:16px;background:#505050;overflow:hidden;border-bottom:1px solid #c4c4c4;box-sizing:border-box"><span class="t" style="left:0;width:39px;text-align:center;top:-12.3px;line-height:26px;font-size:19.500px;color:#fff">9</span></div>
<div style="left:2px;top:636px;width:40px;height:48px;background:#505050;overflow:hidden;border-bottom:1px solid #c4c4c4;box-sizing:border-box"><span class="t" style="left:0;width:39px;text-align:center;top:18.8px;line-height:26px;font-size:19.500px;color:#fff">10</span></div>
<div style="left:2px;top:684px;width:40px;height:36px;background:#505050;overflow:hidden;border-bottom:1px solid #c4c4c4;box-sizing:border-box"><span class="t" style="left:0;width:39px;text-align:center;top:6.8px;line-height:26px;font-size:19.500px;color:#fff">11</span></div>
<div style="left:2px;top:720px;width:40px;height:36px;background:#505050;overflow:hidden;border-bottom:1px solid #c4c4c4;box-sizing:border-box"><span class="t" style="left:0;width:39px;text-align:center;top:6.8px;line-height:26px;font-size:19.500px;color:#fff">12</span></div>
<div style="left:2px;top:756px;width:40px;height:36px;background:#505050;overflow:hidden;border-bottom:1px solid #c4c4c4;box-sizing:border-box"><span class="t" style="left:0;width:39px;text-align:center;top:6.8px;line-height:26px;font-size:19.500px;color:#fff">13</span></div>
<div style="left:2px;top:792px;width:40px;height:36px;background:#505050;overflow:hidden;border-bottom:1px solid #c4c4c4;box-sizing:border-box"><span class="t" style="left:0;width:39px;text-align:center;top:6.8px;line-height:26px;font-size:19.500px;color:#fff">14</span></div>
<div style="left:2px;top:828px;width:40px;height:36px;background:#505050;overflow:hidden;border-bottom:1px solid #c4c4c4;box-sizing:border-box"><span class="t" style="left:0;width:39px;text-align:center;top:6.8px;line-height:26px;font-size:19.500px;color:#fff">15</span></div>
<div style="left:2px;top:864px;width:40px;height:16px;background:#505050;overflow:hidden;border-bottom:1px solid #c4c4c4;box-sizing:border-box"><span class="t" style="left:0;width:39px;text-align:center;top:-12.3px;line-height:26px;font-size:19.500px;color:#fff">17</span></div>
<div style="left:2px;top:880px;width:40px;height:36px;background:#505050;overflow:hidden;border-bottom:1px solid #c4c4c4;box-sizing:border-box"><span class="t" style="left:0;width:39px;text-align:center;top:6.8px;line-height:26px;font-size:19.500px;color:#fff">18</span></div>
<div style="left:2px;top:916px;width:40px;height:36px;background:#505050;overflow:hidden;border-bottom:1px solid #c4c4c4;box-sizing:border-box"><span class="t" style="left:0;width:39px;text-align:center;top:6.8px;line-height:26px;font-size:19.500px;color:#fff">19</span></div>
<div style="left:2px;top:952px;width:40px;height:16px;background:#505050;overflow:hidden;border-bottom:1px solid #c4c4c4;box-sizing:border-box"><span class="t" style="left:0;width:39px;text-align:center;top:-12.3px;line-height:26px;font-size:19.500px;color:#fff">20</span></div>
<div style="left:2px;top:968px;width:40px;height:34px;background:#505050;overflow:hidden;border-bottom:1px solid #c4c4c4;box-sizing:border-box"><span class="t" style="left:0;width:39px;text-align:center;top:6.5px;line-height:26px;font-size:19.500px;color:#fff">21</span></div>
<div style="left:2px;top:1002px;width:40px;height:36px;background:#505050;overflow:hidden;border-bottom:1px solid #c4c4c4;box-sizing:border-box"><span class="t" style="left:0;width:39px;text-align:center;top:6.8px;line-height:26px;font-size:19.500px;color:#fff">22</span></div>
<div style="left:2px;top:1038px;width:40px;height:36px;background:#505050;overflow:hidden;border-bottom:1px solid #c4c4c4;box-sizing:border-box"><span class="t" style="left:0;width:39px;text-align:center;top:6.8px;line-height:26px;font-size:19.500px;color:#fff">23</span></div>
<div style="left:2px;top:1074px;width:40px;height:15px;background:#505050;overflow:hidden;border-bottom:1px solid #c4c4c4;box-sizing:border-box"><span class="t" style="left:0;width:39px;text-align:center;top:-13.3px;line-height:26px;font-size:19.500px;color:#fff">24</span></div>
<div style="left:2px;top:1089px;width:40px;height:36px;background:#505050;overflow:hidden;border-bottom:1px solid #c4c4c4;box-sizing:border-box"><span class="t" style="left:0;width:39px;text-align:center;top:6.8px;line-height:26px;font-size:19.500px;color:#fff">25</span></div>
<div style="left:2px;top:1125px;width:40px;height:36px;background:#505050;overflow:hidden;border-bottom:1px solid #c4c4c4;box-sizing:border-box"><span class="t" style="left:0;width:39px;text-align:center;top:6.8px;line-height:26px;font-size:19.500px;color:#fff">26</span></div>
<div style="left:2px;top:1161px;width:40px;height:36px;background:#505050;overflow:hidden;border-bottom:1px solid #c4c4c4;box-sizing:border-box"><span class="t" style="left:0;width:39px;text-align:center;top:6.8px;line-height:26px;font-size:19.500px;color:#fff">27</span></div>
<div style="left:2px;top:1197px;width:40px;height:16px;background:#505050;overflow:hidden;border-bottom:1px solid #c4c4c4;box-sizing:border-box"><span class="t" style="left:0;width:39px;text-align:center;top:-12.3px;line-height:26px;font-size:19.500px;color:#fff">28</span></div>
<div style="left:2px;top:1213px;width:40px;height:36px;background:#505050;overflow:hidden;border-bottom:1px solid #c4c4c4;box-sizing:border-box"><span class="t" style="left:0;width:39px;text-align:center;top:6.8px;line-height:26px;font-size:19.500px;color:#fff">29</span></div>
<div style="left:2px;top:1249px;width:40px;height:36px;background:#505050;overflow:hidden;border-bottom:1px solid #c4c4c4;box-sizing:border-box"><span class="t" style="left:0;width:39px;text-align:center;top:6.8px;line-height:26px;font-size:19.500px;color:#fff">30</span></div>
<div style="left:2px;top:1285px;width:40px;height:36px;background:#505050;overflow:hidden;border-bottom:1px solid #c4c4c4;box-sizing:border-box"><span class="t" style="left:0;width:39px;text-align:center;top:6.8px;line-height:26px;font-size:19.500px;color:#fff">31</span></div>
<div style="left:2px;top:1321px;width:40px;height:36px;background:#505050;overflow:hidden;border-bottom:1px solid #c4c4c4;box-sizing:border-box"><span class="t" style="left:0;width:39px;text-align:center;top:6.8px;line-height:26px;font-size:19.500px;color:#fff">32</span></div>
<div style="left:2px;top:1357px;width:40px;height:29px;background:#505050;overflow:hidden;border-bottom:1px solid #c4c4c4;box-sizing:border-box"><span class="t" style="left:0;width:39px;text-align:center;top:2.5px;line-height:26px;font-size:19.500px;color:#fff">33</span></div>
<div style="left:2px;top:1386px;width:40px;height:29px;background:#505050;overflow:hidden;border-bottom:1px solid #c4c4c4;box-sizing:border-box"><span class="t" style="left:0;width:39px;text-align:center;top:2.5px;line-height:26px;font-size:19.500px;color:#fff">34</span></div>
<div style="left:2px;top:1415px;width:40px;height:29px;background:#505050;overflow:hidden;border-bottom:1px solid #c4c4c4;box-sizing:border-box"><span class="t" style="left:0;width:39px;text-align:center;top:2.5px;line-height:26px;font-size:19.500px;color:#fff">35</span></div>
<div style="left:2px;top:1444px;width:40px;height:29px;background:#505050;overflow:hidden;border-bottom:1px solid #c4c4c4;box-sizing:border-box"><span class="t" style="left:0;width:39px;text-align:center;top:2.5px;line-height:26px;font-size:19.500px;color:#fff">36</span></div>
<div style="left:2px;top:1473px;width:40px;height:29px;background:#505050;overflow:hidden;border-bottom:1px solid #c4c4c4;box-sizing:border-box"><span class="t" style="left:0;width:39px;text-align:center;top:2.5px;line-height:26px;font-size:19.500px;color:#fff">37</span></div>
<div style="left:2px;top:1502px;width:40px;height:29px;background:#505050;overflow:hidden;border-bottom:1px solid #c4c4c4;box-sizing:border-box"><span class="t" style="left:0;width:39px;text-align:center;top:2.5px;line-height:26px;font-size:19.500px;color:#fff">38</span></div>
<div style="left:2px;top:1531px;width:40px;height:29px;background:#505050;overflow:hidden;border-bottom:1px solid #c4c4c4;box-sizing:border-box"><span class="t" style="left:0;width:39px;text-align:center;top:2.5px;line-height:26px;font-size:19.500px;color:#fff">39</span></div>
<div style="left:2px;top:1560px;width:40px;height:29px;background:#505050;overflow:hidden;border-bottom:1px solid #c4c4c4;box-sizing:border-box"><span class="t" style="left:0;width:39px;text-align:center;top:2.5px;line-height:26px;font-size:19.500px;color:#fff">40</span></div>
<div style="left:2px;top:1589px;width:40px;height:29px;background:#505050;overflow:hidden;border-bottom:1px solid #c4c4c4;box-sizing:border-box"><span class="t" style="left:0;width:39px;text-align:center;top:2.5px;line-height:26px;font-size:19.500px;color:#fff">41</span></div>
<div style="left:2px;top:1618px;width:40px;height:29px;background:#505050;overflow:hidden;border-bottom:1px solid #c4c4c4;box-sizing:border-box"><span class="t" style="left:0;width:39px;text-align:center;top:2.5px;line-height:26px;font-size:19.500px;color:#fff">42</span></div>
<div style="left:2px;top:1647px;width:40px;height:29px;background:#505050;overflow:hidden;border-bottom:1px solid #c4c4c4;box-sizing:border-box"><span class="t" style="left:0;width:39px;text-align:center;top:2.5px;line-height:26px;font-size:19.500px;color:#fff">43</span></div>
<div style="left:2px;top:1676px;width:40px;height:29px;background:#505050;overflow:hidden;border-bottom:1px solid #c4c4c4;box-sizing:border-box"><span class="t" style="left:0;width:39px;text-align:center;top:2.5px;line-height:26px;font-size:19.500px;color:#fff">44</span></div>
<div style="left:2px;top:1705px;width:40px;height:29px;background:#505050;overflow:hidden;border-bottom:1px solid #c4c4c4;box-sizing:border-box"><span class="t" style="left:0;width:39px;text-align:center;top:2.5px;line-height:26px;font-size:19.500px;color:#fff">45</span></div>
<div style="left:2px;top:1734px;width:40px;height:29px;background:#505050;overflow:hidden;border-bottom:1px solid #c4c4c4;box-sizing:border-box"><span class="t" style="left:0;width:39px;text-align:center;top:2.5px;line-height:26px;font-size:19.500px;color:#fff">46</span></div>
<div style="left:2px;top:1763px;width:40px;height:29px;background:#505050;overflow:hidden;border-bottom:1px solid #c4c4c4;box-sizing:border-box"><span class="t" style="left:0;width:39px;text-align:center;top:2.5px;line-height:26px;font-size:19.500px;color:#fff">47</span></div>
<div style="left:2px;top:1792px;width:40px;height:29px;background:#505050;overflow:hidden;border-bottom:1px solid #c4c4c4;box-sizing:border-box"><span class="t" style="left:0;width:39px;text-align:center;top:2.5px;line-height:26px;font-size:19.500px;color:#fff">48</span></div>
<div style="left:2px;top:1821px;width:40px;height:29px;background:#505050;overflow:hidden;border-bottom:1px solid #c4c4c4;box-sizing:border-box"><span class="t" style="left:0;width:39px;text-align:center;top:2.5px;line-height:26px;font-size:19.500px;color:#fff">49</span></div>
<div style="left:2px;top:1850px;width:40px;height:29px;background:#505050;overflow:hidden;border-bottom:1px solid #c4c4c4;box-sizing:border-box"><span class="t" style="left:0;width:39px;text-align:center;top:2.5px;line-height:26px;font-size:19.500px;color:#fff">50</span></div>
<div style="left:2px;top:354px;width:40px;height:1px;background:#1c1c1c;"></div>
<div style="left:41px;top:355px;width:1px;height:1513.5px;background:#8c8c8c;"></div>
<div style="left:40px;top:371px;width:2px;height:35px;background:#10733c;"></div>
<div style="left:40px;top:406px;width:2px;height:34px;background:#10733c;"></div>
<div style="left:0px;top:1868.5px;width:2556px;height:100px;background:#505050;"></div>
<div style="left:2516px;top:326px;width:33px;height:1552.5px;background:#505050;"></div>
<div style="left:2px;top:1868.5px;width:2545px;height:83.5px;background:#505050;"></div>
<div style="left:2px;top:1916.5px;width:2545px;height:1px;background:#3f3f3f;"></div>
<div style="left:2519px;top:326px;width:26px;height:1546px;background:#3b3b3b;border-radius:13px"></div>
<div style="left:2526px;top:352px;width:12px;height:1482.500px;background:#c8c8c8;border-radius:6px"></div>
<svg style="left:2523px;top:333px" width="18" height="12" viewBox="0 0 18 12"><path d="M9 1.500 L15.500 10 L2.500 10 Z" fill="#c8c8c8" stroke="#c8c8c8" stroke-width="1.500" stroke-linejoin="round"/></svg>
<svg style="left:2523px;top:1853.500px" width="18" height="12" viewBox="0 0 18 12"><path d="M9 10.500 L15.500 2 L2.500 2 Z" fill="#c8c8c8" stroke="#c8c8c8" stroke-width="1.500" stroke-linejoin="round"/></svg>
<svg style="left:35px;top:1883px;" width="14" height="18" viewBox="0 0 14 18" fill="none"><path d="M10 2 L3 9 L10 16" stroke="#9a9a9a" stroke-width="1.6" stroke-linecap="round" stroke-linejoin="round"/></svg>
<svg style="left:84px;top:1883px;" width="14" height="18" viewBox="0 0 14 18" fill="none"><path d="M4 2 L11 9 L4 16" stroke="#9a9a9a" stroke-width="1.6" stroke-linecap="round" stroke-linejoin="round"/></svg>
<div style="left:168px;top:1868.5px;width:89px;height:42px;background:#fff;border-radius:0 0 7px 7px"></div>
<div style="left:160px;top:1868.5px;width:8px;height:8px;background:radial-gradient(circle at 0 100%,transparent 7.5px,#fff 8px)"></div>
<div style="left:257px;top:1868.5px;width:8px;height:8px;background:radial-gradient(circle at 100% 100%,transparent 7.5px,#fff 8px)"></div>
<span class="t" style="left:180.5px;top:1875.8px;line-height:27px;font-size:20.5px;letter-spacing:0.50px;color:#222;">Mg-Ca</span>
<div style="left:180px;top:1903px;width:65px;height:2.5px;background:#10733c;"></div>
<div style="left:263px;top:1879px;width:1px;height:27px;background:#8a8a8a;"></div>
<span class="t" style="left:283.5px;top:1881.3px;line-height:27px;font-size:20.5px;letter-spacing:-0.34px;color:#ffffff;">Rezepte</span>
<div style="left:377px;top:1879px;width:1px;height:27px;background:#8a8a8a;"></div>
<svg style="left:440px;top:1883px;" width="18" height="18" viewBox="0 0 18 18" fill="none"><path d="M9 1 V17 M1 9 H17" stroke="#d0d0d0" stroke-width="1.6" stroke-linecap="round"/></svg>
<div style="left:1532px;top:1885.5px;width:2.5px;height:2.5px;background:#d8d8d8;"></div>
<div style="left:1532px;top:1891.5px;width:2.5px;height:2.5px;background:#d8d8d8;"></div>
<div style="left:1532px;top:1897.5px;width:2.5px;height:2.5px;background:#d8d8d8;"></div>
<div style="left:1558px;top:1879px;width:961px;height:26px;background:#3b3b3b;border-radius:13px"></div>
<div style="left:1584px;top:1886px;width:806px;height:12px;background:#c8c8c8;border-radius:6px"></div>
<svg style="left:1565px;top:1885px;" width="12" height="14" viewBox="0 0 12 14" fill="none"><path d="M1 7 L11 1 V13 Z" fill="#c8c8c8"/></svg>
<svg style="left:2500px;top:1885px;" width="12" height="14" viewBox="0 0 12 14" fill="none"><path d="M11 7 L1 1 V13 Z" fill="#c8c8c8"/></svg>
<span class="t" style="left:19.0px;top:1925.3px;line-height:19px;font-size:14.5px;letter-spacing:0.44px;color:#ffffff;">Bereit</span>
<svg style="left:110px;top:1922px;" width="25" height="24" viewBox="0 0 25 24" fill="none"><rect x="1.500" y="3" width="20" height="17" stroke="#e6e6e6" stroke-width="1.4"/><path d="M1.500 7 H21.500 M5 11 H10 M5 15 H9" stroke="#e6e6e6" stroke-width="1.3"/><circle cx="16.500" cy="15.500" r="6" fill="#505050" stroke="#e6e6e6" stroke-width="1.4"/><circle cx="16.500" cy="15.500" r="2.500" fill="#e6e6e6"/></svg>
<svg style="left:157px;top:1922px;" width="24" height="25" viewBox="0 0 24 25" fill="none"><circle cx="11" cy="4.500" r="3" stroke="#e6e6e6" stroke-width="1.4"/><path d="M2 9.500 Q11 12.500 20 9.500 M8 11.500 V17 L4 24 M14 11.500 V15" stroke="#e6e6e6" stroke-width="1.5" stroke-linecap="round"/><path d="M12 16 L21.500 24 M21.500 16 L12 24" stroke="#e6e6e6" stroke-width="1.6" stroke-linecap="round"/></svg>
<span class="t" style="left:185.0px;top:1923.8px;line-height:21px;font-size:16.5px;letter-spacing:-0.30px;font-weight:bold;color:#ffffff;">Barrierefreiheit: Untersuchen</span>
<div style="left:2080px;top:1917.5px;width:60px;height:32px;background:#5c5c5c;"></div>
<svg style="left:2099px;top:1922px;" width="22" height="22" viewBox="0 0 22 22" fill="none"><rect x="1.500" y="1.500" width="19" height="19" stroke="#f4f4f4" stroke-width="1.800"/><path d="M7.800 1.500 V20.500 M14.200 1.500 V20.500 M1.500 7.800 H20.500 M1.500 14.200 H20.500" stroke="#f4f4f4" stroke-width="1.600"/></svg>
<svg style="left:2158px;top:1922px;" width="24" height="22" viewBox="0 0 24 22" fill="none"><rect x="1.500" y="1.500" width="20" height="19" stroke="#f4f4f4" stroke-width="1.800"/><rect x="6" y="5.500" width="11" height="11" stroke="#f4f4f4" stroke-width="1.600"/><path d="M8.500 9 H14.500 M8.500 12.500 H14.500" stroke="#f4f4f4" stroke-width="1.500"/></svg>
<svg style="left:2218px;top:1922px;" width="24" height="22" viewBox="0 0 24 22" fill="none"><rect x="1.500" y="1.500" width="20" height="19" stroke="#f4f4f4" stroke-width="1.800"/><path d="M1.500 12 H15 M8 1.500 V12 M15 1.500 V12" stroke="#f4f4f4" stroke-width="1.700" /></svg>
<div style="left:2268px;top:1933.2px;width:12px;height:1.6px;background:#ededed;"></div>
<div style="left:2288px;top:1933px;width:148px;height:2px;background:#bdbdbd;"></div>
<div style="left:2357.5px;top:1925px;width:8px;height:18px;background:#c8c8c8;"></div>
<svg style="left:2443px;top:1927px;" width="14" height="14" viewBox="0 0 14 14" fill="none"><path d="M7 1 V13 M1 7 H13" stroke="#ededed" stroke-width="1.600"/></svg>
<span class="t" style="left:2475.0px;top:1925.8px;line-height:19px;font-size:14.5px;letter-spacing:0.28px;color:#ffffff;">100 %</span>
<div style="left:0px;top:1949px;width:2549px;height:3px;background:#8a8a8a;"></div>
<div style="left:0px;top:0px;width:2549px;height:2px;background:#8e8e8e;"></div>
<div style="left:0px;top:0px;width:2px;height:1952px;background:#999;"></div>
<div style="left:2547px;top:0px;width:2px;height:1952px;background:#8a8a8a;"></div>
</div></body></html>
